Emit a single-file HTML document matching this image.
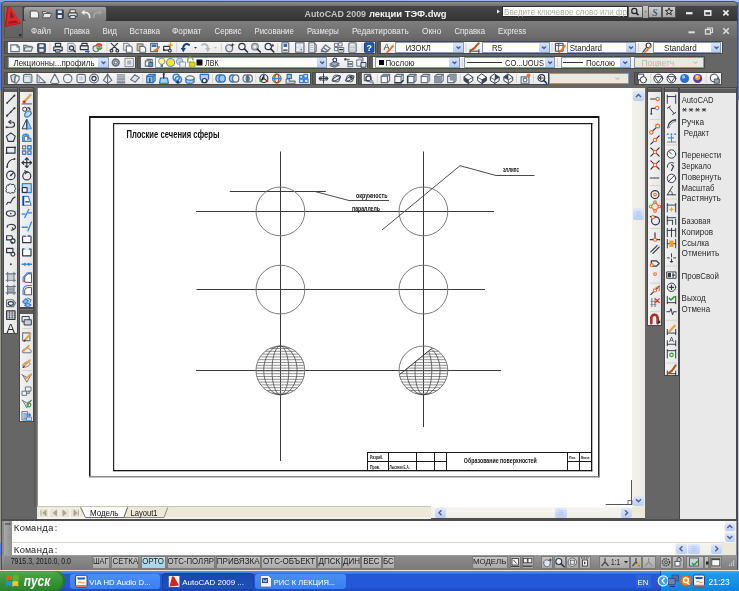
<!DOCTYPE html>
<html><head><meta charset="utf-8"><style>
html,body{margin:0;padding:0;width:739px;height:591px;overflow:hidden;position:relative;background:#5b7fe0}
body>div{position:absolute;box-sizing:border-box}
b{font-weight:700}
svg{position:absolute;left:0;top:0;will-change:transform}
</style></head><body>
<div style="left:0px;top:0px;width:739px;height:591px;background:#5b7fe0"></div>
<div style="left:0px;top:0px;width:739px;height:2px;background:linear-gradient(90deg,#7fa4ee,#a6c4f7)"></div>
<div style="left:0px;top:90px;width:1.6px;height:453px;background:#9d9b8c"></div>
<div style="left:0px;top:556px;width:1.6px;height:14px;background:#8a8a8a"></div>
<div style="left:737.4px;top:100px;width:1.6px;height:470px;background:#b9c3d8"></div>
<div style="left:1px;top:1px;width:737px;height:570px;background:#4e4e4e;border-radius:5px 5px 0 0"></div>
<div style="left:2px;top:2px;width:735px;height:4px;background:linear-gradient(#8e8e8e,#6e6e6e);border-radius:4px 4px 0 0"></div>
<div style="left:2px;top:6px;width:735px;height:15px;background:linear-gradient(#474747,#333)"></div>
<div style="left:2px;top:21px;width:735px;height:17px;background:linear-gradient(#7e7e7e,#6a6a6a)"></div>
<div style="left:2px;top:6px;width:2px;height:564px;background:#666"></div>
<div style="left:3.5px;top:6px;width:19.5px;height:32px;background:linear-gradient(#6e6e6e,#626262);border:1px solid #555;box-sizing:border-box"></div>
<div style="left:23.6px;top:6.8px;width:83.7px;height:14.3px;background:linear-gradient(#a6a6a6,#8a8a8a 50%,#7a7a7a);border-radius:2px;border-right:1px solid #4a4a4a;box-sizing:border-box"></div>
<div style="left:502px;top:6px;width:126px;height:11px;background:#fff;border:1px solid #2a2a2a;box-sizing:border-box"></div>
<div style="left:628px;top:6px;width:15px;height:12px;background:linear-gradient(#d8d8d8,#b0b0b0);border:1px solid #555;box-sizing:border-box"></div>
<div style="left:643px;top:6px;width:5px;height:12px;background:linear-gradient(#c8c8c8,#a0a0a0)"></div>
<div style="left:648px;top:6px;width:14px;height:12px;background:linear-gradient(#d0d0d0,#a8a8a8);border:1px solid #555;box-sizing:border-box"></div>
<div style="left:662px;top:6px;width:14px;height:12px;background:linear-gradient(#d0d0d0,#a8a8a8);border:1px solid #555;box-sizing:border-box"></div>
<div style="left:2px;top:38px;width:735px;height:50px;background:#666"></div>
<div style="left:3.5px;top:41px;width:372.5px;height:13px;background:#5c5c5c;border:1px solid #474747;box-sizing:border-box;border-radius:1px"></div>
<div style="left:8.2px;top:41.8px;width:367px;height:11.4px;background:linear-gradient(#f7f7f7,#e9e9e9)"></div>
<div style="left:376.5px;top:41px;width:346.5px;height:13px;background:#5c5c5c;border:1px solid #474747;box-sizing:border-box;border-radius:1px"></div>
<div style="left:381.2px;top:41.8px;width:341px;height:11.4px;background:linear-gradient(#f7f7f7,#e9e9e9)"></div>
<div style="left:395px;top:42px;width:69px;height:11px;background:#fff;border:1px solid #7f9db9;box-sizing:border-box"></div>
<div style="left:453px;top:43px;width:10px;height:9px;background:linear-gradient(#d6e3fb,#b7cdf6)"></div>
<div style="left:482px;top:42px;width:68px;height:11px;background:#fff;border:1px solid #7f9db9;box-sizing:border-box"></div>
<div style="left:538.5px;top:43px;width:10.5px;height:9px;background:linear-gradient(#d6e3fb,#b7cdf6)"></div>
<div style="left:567px;top:42px;width:69px;height:11px;background:#fff;border:1px solid #7f9db9;box-sizing:border-box"></div>
<div style="left:625.5px;top:43px;width:9.5px;height:9px;background:linear-gradient(#d6e3fb,#b7cdf6)"></div>
<div style="left:653px;top:42px;width:68px;height:11px;background:#fff;border:1px solid #7f9db9;box-sizing:border-box"></div>
<div style="left:711px;top:43px;width:9px;height:9px;background:linear-gradient(#d6e3fb,#b7cdf6)"></div>
<div style="left:3.5px;top:56px;width:132.5px;height:13px;background:#5c5c5c;border:1px solid #474747;box-sizing:border-box;border-radius:1px"></div>
<div style="left:8.2px;top:56.8px;width:127px;height:11.4px;background:linear-gradient(#f7f7f7,#e9e9e9)"></div>
<div style="left:8px;top:57px;width:101px;height:11px;background:#fff;border:1px solid #7f9db9;box-sizing:border-box"></div>
<div style="left:98px;top:58px;width:10px;height:9px;background:linear-gradient(#d6e3fb,#b7cdf6)"></div>
<div style="left:136.5px;top:56px;width:231.5px;height:13px;background:#5c5c5c;border:1px solid #474747;box-sizing:border-box;border-radius:1px"></div>
<div style="left:141.2px;top:56.8px;width:226px;height:11.4px;background:linear-gradient(#f7f7f7,#e9e9e9)"></div>
<div style="left:155px;top:57px;width:172px;height:11px;background:#fff;border:1px solid #7f9db9;box-sizing:border-box"></div>
<div style="left:316.7px;top:58px;width:9.300000000000011px;height:9px;background:linear-gradient(#d6e3fb,#b7cdf6)"></div>
<div style="left:368.5px;top:56px;width:336.5px;height:13px;background:#5c5c5c;border:1px solid #474747;box-sizing:border-box;border-radius:1px"></div>
<div style="left:373.2px;top:56.8px;width:331px;height:11.4px;background:linear-gradient(#f7f7f7,#e9e9e9)"></div>
<div style="left:374.5px;top:57px;width:85.5px;height:11px;background:#fff;border:1px solid #7f9db9;box-sizing:border-box"></div>
<div style="left:449px;top:58px;width:10px;height:9px;background:linear-gradient(#d6e3fb,#b7cdf6)"></div>
<div style="left:378.7px;top:60px;width:5px;height:5px;background:#000"></div>
<div style="left:464.4px;top:57px;width:90.60000000000002px;height:11px;background:#fff;border:1px solid #7f9db9;box-sizing:border-box"></div>
<div style="left:544.6px;top:58px;width:9.399999999999977px;height:9px;background:linear-gradient(#d6e3fb,#b7cdf6)"></div>
<div style="left:467px;top:62px;width:34.6px;height:1px;background:#333"></div>
<div style="left:560.5px;top:57px;width:70.5px;height:11px;background:#fff;border:1px solid #7f9db9;box-sizing:border-box"></div>
<div style="left:619.7px;top:58px;width:10.299999999999955px;height:9px;background:linear-gradient(#d6e3fb,#b7cdf6)"></div>
<div style="left:563px;top:62px;width:20px;height:1px;background:#333"></div>
<div style="left:633.8px;top:57px;width:70.20000000000005px;height:11px;background:#ece9d8;border:1px solid #7f9db9;box-sizing:border-box"></div>
<div style="left:3.5px;top:72px;width:307.5px;height:13px;background:#5c5c5c;border:1px solid #474747;box-sizing:border-box;border-radius:1px"></div>
<div style="left:8.2px;top:72.8px;width:302px;height:11.4px;background:linear-gradient(#f7f7f7,#e9e9e9)"></div>
<div style="left:311.5px;top:72px;width:45.5px;height:13px;background:#5c5c5c;border:1px solid #474747;box-sizing:border-box;border-radius:1px"></div>
<div style="left:316.2px;top:72.8px;width:40px;height:11.4px;background:linear-gradient(#f7f7f7,#e9e9e9)"></div>
<div style="left:357.5px;top:72px;width:191.5px;height:13px;background:#5c5c5c;border:1px solid #474747;box-sizing:border-box;border-radius:1px"></div>
<div style="left:362.2px;top:72.8px;width:186px;height:11.4px;background:linear-gradient(#f7f7f7,#e9e9e9)"></div>
<div style="left:549.4px;top:73px;width:79.60000000000002px;height:11px;background:#ece9d8;border:1px solid #7f9db9;box-sizing:border-box"></div>
<div style="left:634.3px;top:72px;width:87.70000000000005px;height:13px;background:#5c5c5c;border:1px solid #474747;box-sizing:border-box;border-radius:1px"></div>
<div style="left:639.0px;top:72.8px;width:82.20000000000005px;height:11.4px;background:linear-gradient(#f7f7f7,#e9e9e9)"></div>
<div style="left:2px;top:88px;width:35px;height:431px;background:#666"></div>
<div style="left:2.8px;top:86.80000000000001px;width:15.2px;height:247.2px;background:#5a5a5a;border:1px solid #474747;box-sizing:border-box"></div>
<div style="left:3.5999999999999996px;top:87.7px;width:13.6px;height:1px;background:#777"></div>
<div style="left:3.8px;top:92.0px;width:13.2px;height:241.2px;background:linear-gradient(90deg,#f3f3f3,#e6e6e6)"></div>
<div style="left:19px;top:86.80000000000001px;width:15.200000000000003px;height:221.0px;background:#5a5a5a;border:1px solid #474747;box-sizing:border-box"></div>
<div style="left:19.8px;top:87.7px;width:13.600000000000003px;height:1px;background:#777"></div>
<div style="left:20px;top:92.0px;width:13.200000000000003px;height:215.0px;background:linear-gradient(90deg,#f3f3f3,#e6e6e6)"></div>
<div style="left:19px;top:308.4px;width:15.200000000000003px;height:113.6px;background:#5a5a5a;border:1px solid #474747;box-sizing:border-box"></div>
<div style="left:19.8px;top:309.3px;width:13.600000000000003px;height:1px;background:#777"></div>
<div style="left:20px;top:313.6px;width:13.200000000000003px;height:107.6px;background:linear-gradient(90deg,#f3f3f3,#e6e6e6)"></div>
<div style="left:37px;top:88px;width:595px;height:419px;background:#fff"></div>
<div style="left:34px;top:88px;width:4px;height:419px;background:linear-gradient(90deg,#505050,#5c5c5c 30%,#707070 65%,#9c9a8c)"></div>
<div style="left:632px;top:88px;width:13px;height:419px;background:linear-gradient(90deg,#f3f2ec,#ebeae3)"></div>
<div style="left:633px;top:91px;width:11px;height:9.5px;background:linear-gradient(#dfe8fb,#b9cdf5);border-radius:2px"></div>
<div style="left:633px;top:208px;width:11px;height:12px;background:linear-gradient(#dfe8fb,#b9cdf5);border-radius:2px"></div>
<div style="left:633px;top:495.5px;width:11px;height:10px;background:linear-gradient(#dfe8fb,#b9cdf5);border-radius:2px"></div>
<div style="left:37px;top:506px;width:394px;height:13.5px;background:linear-gradient(#c9c6b5 0,#c9c6b5 1px,#ece9d8 1px,#ece9d8 11.5px,#f4f2ea 11.5px)"></div>
<div style="left:431px;top:507px;width:201px;height:11px;background:linear-gradient(#f6f5f0,#eeede6)"></div>
<div style="left:434.6px;top:507.5px;width:11.4px;height:10.5px;background:linear-gradient(#dfe8fb,#b9cdf5);border-radius:2px"></div>
<div style="left:554.7px;top:507.5px;width:12px;height:10.5px;background:linear-gradient(#dfe8fb,#b9cdf5);border-radius:2px"></div>
<div style="left:621px;top:507.5px;width:10.5px;height:10.5px;background:linear-gradient(#dfe8fb,#b9cdf5);border-radius:2px"></div>
<div style="left:632px;top:507px;width:13px;height:11px;background:#ece9d8"></div>
<div style="left:38.5px;top:507.5px;width:10px;height:10px;background:#e6e3d2;border:1px solid #f4f2e8;box-sizing:border-box"></div>
<div style="left:49.0px;top:507.5px;width:10px;height:10px;background:#e6e3d2;border:1px solid #f4f2e8;box-sizing:border-box"></div>
<div style="left:59.5px;top:507.5px;width:10px;height:10px;background:#e6e3d2;border:1px solid #f4f2e8;box-sizing:border-box"></div>
<div style="left:70.0px;top:507.5px;width:10px;height:10px;background:#e6e3d2;border:1px solid #f4f2e8;box-sizing:border-box"></div>
<div style="left:645px;top:88px;width:35px;height:431px;background:#666"></div>
<div style="left:647.1px;top:86.7px;width:15.199999999999932px;height:239.29999999999998px;background:#5a5a5a;border:1px solid #474747;box-sizing:border-box"></div>
<div style="left:647.9px;top:87.6px;width:13.599999999999932px;height:1px;background:#777"></div>
<div style="left:648.1px;top:91.89999999999999px;width:13.199999999999932px;height:233.29999999999998px;background:linear-gradient(90deg,#f3f3f3,#e6e6e6)"></div>
<div style="left:663.8px;top:86.7px;width:15.200000000000045px;height:289.3px;background:#5a5a5a;border:1px solid #474747;box-sizing:border-box"></div>
<div style="left:664.5999999999999px;top:87.6px;width:13.600000000000046px;height:1px;background:#777"></div>
<div style="left:664.8px;top:91.89999999999999px;width:13.200000000000045px;height:283.3px;background:linear-gradient(90deg,#f3f3f3,#e6e6e6)"></div>
<div style="left:679px;top:87.3px;width:58px;height:432px;background:#5a5a5a;border:1px solid #474747;box-sizing:border-box"></div>
<div style="left:680.2px;top:92.6px;width:55.5px;height:426px;background:#e9e9e9"></div>
<div style="left:680px;top:87.6px;width:56px;height:1px;background:#777"></div>
<div style="left:2px;top:519.3px;width:735px;height:1.9px;background:#4e4e4e"></div>
<div style="left:2px;top:521px;width:735px;height:34px;background:#8c8c8c"></div>
<div style="left:4px;top:521px;width:8px;height:34px;background:linear-gradient(90deg,#a8a8a8,#909090)"></div>
<div style="left:5px;top:523px;width:6px;height:2px;background:#6a6a6a"></div>
<div style="left:12px;top:521px;width:724px;height:34px;background:#fff"></div>
<div style="left:12px;top:542px;width:712px;height:1px;background:#d8d5c4"></div>
<div style="left:724px;top:521px;width:12px;height:22px;background:linear-gradient(90deg,#f6f5f0,#efeee8)"></div>
<div style="left:724.8px;top:522.5px;width:10px;height:8.5px;background:linear-gradient(#dfe8fb,#b9cdf5);border-radius:2px"></div>
<div style="left:724.8px;top:533px;width:10px;height:8.5px;background:linear-gradient(#dfe8fb,#b9cdf5);border-radius:2px"></div>
<div style="left:675px;top:543px;width:61px;height:12px;background:linear-gradient(#f6f5f0,#eeede6)"></div>
<div style="left:676px;top:543.5px;width:10.5px;height:10.5px;background:linear-gradient(#dfe8fb,#b9cdf5);border-radius:2px"></div>
<div style="left:688.3px;top:543.5px;width:11.3px;height:10.5px;background:linear-gradient(#dfe8fb,#b9cdf5);border-radius:2px"></div>
<div style="left:711px;top:543.5px;width:11px;height:10.5px;background:linear-gradient(#dfe8fb,#b9cdf5);border-radius:2px"></div>
<div style="left:722px;top:543px;width:14px;height:12px;background:#ece9d8"></div>
<div style="left:2px;top:555px;width:735px;height:15px;background:linear-gradient(#9a9a9a,#7c7c7c)"></div>
<div style="left:4px;top:556px;width:88px;height:13px;background:linear-gradient(#8d8d8d,#7a7a7a)"></div>
<div style="left:92.2px;top:556px;width:17.799999999999997px;height:12.5px;background:linear-gradient(#c6c6c6,#aaaaaa);border:1px solid #7a7a7a;box-sizing:border-box"></div>
<div style="left:110.9px;top:556px;width:28.599999999999994px;height:12.5px;background:linear-gradient(#c6c6c6,#aaaaaa);border:1px solid #7a7a7a;box-sizing:border-box"></div>
<div style="left:140.9px;top:556px;width:25.099999999999994px;height:12.5px;background:linear-gradient(#bfe3ee,#a3d3e6);border:1px solid #7a7a7a;box-sizing:border-box"></div>
<div style="left:166.6px;top:556px;width:48.900000000000006px;height:12.5px;background:linear-gradient(#c6c6c6,#aaaaaa);border:1px solid #7a7a7a;box-sizing:border-box"></div>
<div style="left:215.5px;top:556px;width:45.5px;height:12.5px;background:linear-gradient(#c6c6c6,#aaaaaa);border:1px solid #7a7a7a;box-sizing:border-box"></div>
<div style="left:261px;top:556px;width:56.10000000000002px;height:12.5px;background:linear-gradient(#c6c6c6,#aaaaaa);border:1px solid #7a7a7a;box-sizing:border-box"></div>
<div style="left:317.1px;top:556px;width:24.5px;height:12.5px;background:linear-gradient(#c6c6c6,#aaaaaa);border:1px solid #7a7a7a;box-sizing:border-box"></div>
<div style="left:341.6px;top:556px;width:19.69999999999999px;height:12.5px;background:linear-gradient(#c6c6c6,#aaaaaa);border:1px solid #7a7a7a;box-sizing:border-box"></div>
<div style="left:361.3px;top:556px;width:20.30000000000001px;height:12.5px;background:linear-gradient(#c6c6c6,#aaaaaa);border:1px solid #7a7a7a;box-sizing:border-box"></div>
<div style="left:381.6px;top:556px;width:13.5px;height:12.5px;background:linear-gradient(#c6c6c6,#aaaaaa);border:1px solid #7a7a7a;box-sizing:border-box"></div>
<div style="left:395.1px;top:556px;width:77px;height:12.5px;background:linear-gradient(#8c8c8c,#7a7a7a)"></div>
<div style="left:472.3px;top:556px;width:36.0px;height:12.5px;background:linear-gradient(#c4c4c4,#a8a8a8);border:1px solid #7a7a7a;box-sizing:border-box"></div>
<div style="left:509.6px;top:556px;width:11.399999999999977px;height:12.5px;background:linear-gradient(#c4c4c4,#a8a8a8);border:1px solid #7a7a7a;box-sizing:border-box"></div>
<div style="left:521.6px;top:556px;width:12.399999999999977px;height:12.5px;background:linear-gradient(#c4c4c4,#a8a8a8);border:1px solid #7a7a7a;box-sizing:border-box"></div>
<div style="left:541.2px;top:556px;width:12.099999999999909px;height:12.5px;background:linear-gradient(#c4c4c4,#a8a8a8);border:1px solid #7a7a7a;box-sizing:border-box"></div>
<div style="left:553.5px;top:556px;width:12.5px;height:12.5px;background:linear-gradient(#c4c4c4,#a8a8a8);border:1px solid #7a7a7a;box-sizing:border-box"></div>
<div style="left:566px;top:556px;width:12.5px;height:12.5px;background:linear-gradient(#c4c4c4,#a8a8a8);border:1px solid #7a7a7a;box-sizing:border-box"></div>
<div style="left:579px;top:556px;width:12px;height:12.5px;background:linear-gradient(#c4c4c4,#a8a8a8);border:1px solid #7a7a7a;box-sizing:border-box"></div>
<div style="left:598.5px;top:556px;width:31.0px;height:12.5px;background:linear-gradient(#c4c4c4,#a8a8a8);border:1px solid #7a7a7a;box-sizing:border-box"></div>
<div style="left:630.4px;top:556px;width:11.600000000000023px;height:12.5px;background:linear-gradient(#c4c4c4,#a8a8a8);border:1px solid #7a7a7a;box-sizing:border-box"></div>
<div style="left:642px;top:556px;width:13.5px;height:12.5px;background:linear-gradient(#c4c4c4,#a8a8a8);border:1px solid #7a7a7a;box-sizing:border-box"></div>
<div style="left:660px;top:556px;width:12px;height:12.5px;background:linear-gradient(#c4c4c4,#a8a8a8);border:1px solid #7a7a7a;box-sizing:border-box"></div>
<div style="left:672px;top:556px;width:11.5px;height:12.5px;background:linear-gradient(#c4c4c4,#a8a8a8);border:1px solid #7a7a7a;box-sizing:border-box"></div>
<div style="left:686px;top:556px;width:18px;height:12.5px;background:linear-gradient(#c4c4c4,#a8a8a8);border:1px solid #7a7a7a;box-sizing:border-box"></div>
<div style="left:704px;top:556px;width:5px;height:12.5px;background:linear-gradient(#c4c4c4,#a8a8a8);border:1px solid #7a7a7a;box-sizing:border-box"></div>
<div style="left:710px;top:556px;width:11.5px;height:12.5px;background:linear-gradient(#c4c4c4,#a8a8a8);border:1px solid #7a7a7a;box-sizing:border-box"></div>
<div style="left:0px;top:570px;width:739px;height:21px;background:linear-gradient(#ece4d4 0,#ece4d4 0.8px,#4a92f5 1.2px,#3a84ee 3px,#2458d6 4.5px,#2357d8 17px,#1b47bc 21px)"></div>
<div style="left:0px;top:570.5px;width:64.5px;height:20.5px;background:linear-gradient(#5cb85c 0,#44a344 3px,#379637 50%,#2c852c);border-radius:0 9px 9px 0;box-shadow:inset -2px 0 2px #2a6a2a"></div>
<div style="left:70.3px;top:573.5px;width:89.7px;height:15.5px;background:linear-gradient(#4a8ef8,#3a7ff2);border-radius:3px"></div>
<div style="left:161.8px;top:573.3px;width:92.4px;height:16.5px;background:linear-gradient(#1a47b0,#1f50bc);border-radius:3px;border:1px solid #1a3f98"></div>
<div style="left:254.9px;top:573.5px;width:91.1px;height:15.5px;background:linear-gradient(#4a8ef8,#3a7ff2);border-radius:3px"></div>
<div style="left:660px;top:570.8px;width:79px;height:20.2px;background:linear-gradient(#3ab0f8 0,#1e98ee 3px,#1390e8 60%,#0f84dc);border-left:1px solid #1a4fb0;box-sizing:border-box"></div>
<div style="left:635.5px;top:575px;width:15px;height:12.5px;background:#2f62d4"></div>
<svg width="739" height="591" viewBox="0 0 739 591"><g transform="translate(9.75,42.25) scale(1.05)" stroke-width="1.1" stroke-linecap="round" stroke-linejoin="round"><path d="M1 2.5h6l2 2v4.5h-8z" fill="#f3f5f8" stroke="#66707c"/><path d="M7 2.5v2h2" fill="none" stroke="#66707c"/></g>
<g transform="translate(22.75,42.25) scale(1.05)" stroke-width="1.1" stroke-linecap="round" stroke-linejoin="round"><path d="M1 3h3l1 1h3v1" fill="none" stroke="#66707c"/><path d="M1 3v5.5h7l1.5-4h-7l-1.5 4" fill="#dfe5ec" stroke="#66707c"/></g>
<g transform="translate(36.25,42.25) scale(1.05)" stroke-width="1.1" stroke-linecap="round" stroke-linejoin="round"><rect x="1.5" y="1.5" width="7" height="8" rx="0.5" fill="#5a6b86" stroke="#2f3642"/><rect x="3" y="2" width="4" height="2.5" fill="#e8ecf2"/><rect x="3" y="6.5" width="4" height="2.5" fill="#e8ecf2"/></g>
<g transform="translate(52.75,42.25) scale(1.05)" stroke-width="1.1" stroke-linecap="round" stroke-linejoin="round"><rect x="2.5" y="1" width="5" height="3" fill="#f3f5f8" stroke="#2f3642"/><path d="M1 4.5h8v3.5h-8z" fill="#e6e9ee" stroke="#2f3642"/><rect x="3" y="7" width="4" height="2.5" fill="#9cb6d4" stroke="#2f3642" stroke-width="0.8"/></g>
<g transform="translate(66.25,42.25) scale(1.05)" stroke-width="1.1" stroke-linecap="round" stroke-linejoin="round"><path d="M1.5 1h5l2 2v6h-7z" fill="#eef0f3" stroke="#9aa2ad"/><circle cx="5" cy="5.5" r="2" fill="#dbe9f5" stroke="#2f3642"/><path d="M6.5 7l2 2" stroke="#2f3642" stroke-width="1.3"/></g>
<g transform="translate(79.25,42.25) scale(1.05)" stroke-width="1.1" stroke-linecap="round" stroke-linejoin="round"><rect x="2.5" y="1" width="5" height="2.5" fill="#f3f5f8" stroke="#2f3642"/><path d="M1 3.5h7.5v3.5h-7.5z" fill="#e6e9ee" stroke="#2f3642"/><path d="M5.5 8.2h2.5v-1.3l2 2l-2 2v-1.3h-2.5z" fill="#1f63c9"/></g>
<g transform="translate(92.15,42.25) scale(1.05)" stroke-width="1.1" stroke-linecap="round" stroke-linejoin="round"><path d="M0.8 6c0-2 2-3 4-3s3 3 1 5s-5 1-5-2z" fill="#e3e6ea" stroke="#66707c"/><circle cx="6.5" cy="3.8" r="3" fill="#f0a030"/><path d="M4 3a3 3 0 0 1 5 0" stroke="#d33" stroke-width="1.4" fill="none"/><path d="M5 6a3 3 0 0 0 4-0.5" stroke="#3a9a3a" stroke-width="1.4" fill="none"/><circle cx="6.5" cy="3.8" r="1.2" fill="#4a90d8"/></g>
<g transform="translate(109.15,42.25) scale(1.05)" stroke-width="1.1" stroke-linecap="round" stroke-linejoin="round"><path d="M2 1l6 6M8 1l-6 6" stroke="#2f3642" stroke-width="1.1"/><circle cx="2.2" cy="8" r="1.3" fill="none" stroke="#2f3642"/><circle cx="7.8" cy="8" r="1.3" fill="none" stroke="#2f3642"/></g>
<g transform="translate(122.65,42.25) scale(1.05)" stroke-width="1.1" stroke-linecap="round" stroke-linejoin="round"><path d="M1 1h4l1.5 1.5v5h-5.5z" fill="#f0f2f5" stroke="#8b939e"/><path d="M3.5 3.5h4l1.5 1.5v4.5h-5.5z" fill="#fff" stroke="#66707c"/></g>
<g transform="translate(136.15,42.25) scale(1.05)" stroke-width="1.1" stroke-linecap="round" stroke-linejoin="round"><path d="M1 1.5h5.5v6.5h-5.5z" fill="#c9bda6" stroke="#8b8070"/><path d="M3.5 4h4l1.5 1.5v4h-5.5z" fill="#fff" stroke="#66707c"/></g>
<g transform="translate(149.05,42.25) scale(1.05)" stroke-width="1.1" stroke-linecap="round" stroke-linejoin="round"><rect x="1.5" y="1" width="6.5" height="8" fill="#f3f5f8" stroke="#66707c"/><rect x="2.5" y="2" width="4.5" height="2.5" fill="#2e6cc4"/><path d="M5 8l3-1.5l1.5-2" stroke="#e8782a" stroke-width="2"/></g>
<g transform="translate(162.55,42.25) scale(1.05)" stroke-width="1.1" stroke-linecap="round" stroke-linejoin="round"><path d="M1 4h6v3.5h-6z" fill="none" stroke="#2f3642"/><circle cx="1.5" cy="7.5" r="1" fill="#2f3642"/><circle cx="7" cy="8" r="1.3" fill="#fff" stroke="#2f3642"/><path d="M7.5 0.5l0.6 1.6l1.6 0.6l-1.6 0.6l-0.6 1.6l-0.6-1.6l-1.6-0.6l1.6-0.6z" fill="#f0a020" stroke="#e09010" stroke-width="0.5"/></g>
<g transform="translate(180.15,42.25) scale(1.05)" stroke-width="1.1" stroke-linecap="round" stroke-linejoin="round"><path d="M8.5 2.5c-3-2-6 0-5.5 4" fill="none" stroke="#1e3f86" stroke-width="1.8"/><path d="M0.5 5.5l2.5 4l2.5-4z" fill="#1e3f86"/></g>
<g transform="translate(190.25,42.25) scale(1.05)" stroke-width="1.1" stroke-linecap="round" stroke-linejoin="round"><path d="M3.5 4.5h3l-1.5 1.8z" fill="#1e3f86"/></g>
<g transform="translate(200.45,42.25) scale(1.05)" stroke-width="1.1" stroke-linecap="round" stroke-linejoin="round"><path d="M1.5 2.5c3-2 6 0 5.5 4" fill="none" stroke="#b4bac2" stroke-width="1.8"/><path d="M9.5 5.5l-2.5 4l-2.5-4z" fill="#b4bac2"/></g>
<g transform="translate(210.25,42.25) scale(1.05)" stroke-width="1.1" stroke-linecap="round" stroke-linejoin="round"><path d="M3.5 4.5h3l-1.5 1.8z" fill="#b8bcc4"/></g>
<g transform="translate(224.15,42.25) scale(1.05)" stroke-width="1.1" stroke-linecap="round" stroke-linejoin="round"><path d="M1.5 5c0-2 2-3 4-2.5s3 2 2.5 4s-2 3-4 2.5s-2.5-2-2.5-4z" fill="#e3e7ec" stroke="#66707c"/><path d="M8 0.5l0.5 1.5l1.5 0.5l-1.5 0.5l-0.5 1.5l-0.5-1.5l-1.5-0.5l1.5-0.5z" fill="#2f3642"/></g>
<g transform="translate(237.75,42.25) scale(1.05)" stroke-width="1.1" stroke-linecap="round" stroke-linejoin="round"><circle cx="4" cy="4" r="3" fill="#e8f1f6" stroke="#2f3642" stroke-width="1.1"/><path d="M6.3 6.3l3 3" stroke="#2f3642" stroke-width="1.6"/></g>
<g transform="translate(250.55,42.25) scale(1.05)" stroke-width="1.1" stroke-linecap="round" stroke-linejoin="round"><circle cx="4.2" cy="4.2" r="3.2" fill="#b9c4cc" stroke="#7d8890" stroke-width="1.1"/><circle cx="4.2" cy="4.2" r="1.2" fill="#f4f6f8"/><path d="M6.5 6.5l2.8 2.8" stroke="#2f3642" stroke-width="1.6"/></g>
<g transform="translate(264.05,42.25) scale(1.05)" stroke-width="1.1" stroke-linecap="round" stroke-linejoin="round"><circle cx="4" cy="4" r="3" fill="#e8f1f6" stroke="#2f3642" stroke-width="1.1"/><path d="M6.3 6.3l3 3" stroke="#2f3642" stroke-width="1.6"/><path d="M5 2.5h3v-1.5l1.5 2l-1.5 2v-1.5" fill="#2f3642" stroke="none"/></g>
<g transform="translate(280.35,42.25) scale(1.05)" stroke-width="1.1" stroke-linecap="round" stroke-linejoin="round"><rect x="1.5" y="0.5" width="6.5" height="9" fill="#f5f7fa" stroke="#66707c"/><rect x="3" y="1.5" width="3.5" height="3" fill="#2e6cc4"/><path d="M3 7.5h3.5" stroke="#2f3642" stroke-width="1"/></g>
<g transform="translate(294.55,42.25) scale(1.05)" stroke-width="1.1" stroke-linecap="round" stroke-linejoin="round"><rect x="1" y="0.5" width="8" height="9" fill="#d7dde4" stroke="#66707c"/><path d="M2 2h2v2h-2zM6 2h2v2h-2zM2 6h2v2h-2zM6 6h2v2h-2z" fill="#f6f7f9"/><circle cx="6.5" cy="7" r="0.9" fill="#3c82d6"/></g>
<g transform="translate(306.75,42.25) scale(1.05)" stroke-width="1.1" stroke-linecap="round" stroke-linejoin="round"><path d="M2 0.5h5.5v9h-5.5z" fill="#eef0f3" stroke="#66707c"/><path d="M7.5 1l1.5 1.5v6l-1.5 1" fill="#c9ced6" stroke="#66707c"/><path d="M3 3h3M3 5h3M3 7h3" stroke="#aab2bc" stroke-width="0.8"/></g>
<g transform="translate(320.25,42.25) scale(1.05)" stroke-width="1.1" stroke-linecap="round" stroke-linejoin="round"><path d="M1 7.5l4-5l4.5 3.5l-4 3.5z" fill="#e6e9ec" stroke="#66707c"/><path d="M3.5 5.5l4 3" stroke="#66707c"/><path d="M1 9h4" stroke="#66707c"/></g>
<g transform="translate(333.75,42.25) scale(1.05)" stroke-width="1.1" stroke-linecap="round" stroke-linejoin="round"><path d="M1 1h3v3h-3zM5 0.5h3v3h-3zM1 5h3v3h-3z" fill="#f4f6f8" stroke="#66707c" stroke-width="0.9"/><rect x="4.5" y="5" width="5" height="4.5" fill="#dfe4ea" stroke="#66707c" stroke-width="0.9"/><path d="M5.5 7h3" stroke="#2f3642"/></g>
<g transform="translate(347.25,42.25) scale(1.05)" stroke-width="1.1" stroke-linecap="round" stroke-linejoin="round"><rect x="1.5" y="0.5" width="7" height="9" rx="1" fill="#eef0f3" stroke="#66707c"/><rect x="2.5" y="1.5" width="5" height="2" fill="#fff" stroke="#9aa2ad" stroke-width="0.6"/><path d="M2.7 5h4.6M2.7 6.5h4.6M2.7 8h4.6" stroke="#aab2bc" stroke-width="0.7"/></g>
<g transform="translate(363.95,42.25) scale(1.05)" stroke-width="1.1" stroke-linecap="round" stroke-linejoin="round"><rect x="0.5" y="0.5" width="9" height="9" rx="1.2" fill="#1c5aa8" stroke="#16478a"/><text x="5" y="8.3" font-family="Liberation Sans" font-weight="700" font-size="8.5" text-anchor="middle" fill="#fff" stroke="none">?</text></g>
<g transform="translate(382.95,42.25) scale(1.05)" stroke-width="1.1" stroke-linecap="round" stroke-linejoin="round"><text x="3.5" y="7.8" font-family="Liberation Sans" font-size="9" text-anchor="middle" fill="#2f3642" stroke="none">A</text><path d="M4 9.5c1-1 2-1.5 3-3l2.5-3" stroke="#e8782a" stroke-width="1.8" fill="none"/></g>
<g transform="translate(469.25,42.25) scale(1.05)" stroke-width="1.1" stroke-linecap="round" stroke-linejoin="round"><path d="M0.8 7v3M9.2 7v3M0.8 8.5h8.4" stroke="#2f3642" stroke-width="0.9"/><path d="M2 7.5c2-1 4-2.5 5-4.5l2-2" stroke="#b05a20" stroke-width="2" fill="none"/></g>
<g transform="translate(554.95,42.25) scale(1.05)" stroke-width="1.1" stroke-linecap="round" stroke-linejoin="round"><rect x="0.8" y="1" width="7" height="7.5" fill="#f6f7f9" stroke="#2f3642" stroke-width="0.9"/><path d="M0.8 3h7M3.5 1v7.5" stroke="#2f3642" stroke-width="0.7"/><path d="M4 9.5c1-1 2-1.5 3-3l2.5-3" stroke="#e8782a" stroke-width="1.8" fill="none"/></g>
<g transform="translate(641.75,42.25) scale(1.05)" stroke-width="1.1" stroke-linecap="round" stroke-linejoin="round"><path d="M1 9.5l3-4" stroke="#2f3642"/><circle cx="6.5" cy="3" r="2.3" fill="#fff" stroke="#2f3642"/><path d="M3 9.5c1-1 2-1.5 3-3l2.5-3" stroke="#e8782a" stroke-width="1.6" fill="none"/></g>
<line x1="50" y1="43" x2="50" y2="52" stroke="#d6d3c4" stroke-width="1"/>
<line x1="107" y1="43" x2="107" y2="52" stroke="#d6d3c4" stroke-width="1"/>
<line x1="176.6" y1="43" x2="176.6" y2="52" stroke="#d6d3c4" stroke-width="1"/>
<line x1="221.3" y1="43" x2="221.3" y2="52" stroke="#d6d3c4" stroke-width="1"/>
<line x1="277.4" y1="43" x2="277.4" y2="52" stroke="#d6d3c4" stroke-width="1"/>
<line x1="362" y1="43" x2="362" y2="52" stroke="#d6d3c4" stroke-width="1"/>
<line x1="466.0" y1="43" x2="466.0" y2="52" stroke="#d6d3c4" stroke-width="1"/>
<line x1="552.0" y1="43" x2="552.0" y2="52" stroke="#d6d3c4" stroke-width="1"/>
<line x1="638.5" y1="43" x2="638.5" y2="52" stroke="#d6d3c4" stroke-width="1"/>
<g transform="translate(110.45,57.25) scale(1.05)" stroke-width="1.1" stroke-linecap="round" stroke-linejoin="round"><circle cx="5" cy="5" r="3.2" fill="none" stroke="#66707c" stroke-width="1.6" stroke-dasharray="1.5 1"/><circle cx="5" cy="5" r="1.6" fill="none" stroke="#66707c"/></g>
<g transform="translate(123.95,57.25) scale(1.05)" stroke-width="1.1" stroke-linecap="round" stroke-linejoin="round"><rect x="1" y="1" width="8" height="8" fill="none" stroke="#8a929c" stroke-dasharray="1 1"/><rect x="3" y="3" width="4" height="4" fill="#aab2bc"/></g>
<g transform="translate(143.75,57.25) scale(1.05)" stroke-width="1.1" stroke-linecap="round" stroke-linejoin="round"><path d="M1.5 3.5h5v5h-5z" fill="#eef0f3" stroke="#66707c"/><path d="M3 2h5v5" fill="none" stroke="#66707c"/><rect x="5" y="5" width="3.5" height="4" fill="#5a8fd0" stroke="#2f3642" stroke-width="0.6"/></g>
<g transform="translate(156.55,57.25) scale(1.05)" stroke-width="1.1" stroke-linecap="round" stroke-linejoin="round"><circle cx="5" cy="3.8" r="3" fill="#fff8a0" stroke="#8a8a50" stroke-width="0.8"/><rect x="3.8" y="6.8" width="2.4" height="2.5" fill="#6070a0"/></g>
<g transform="translate(165.35,57.25) scale(1.05)" stroke-width="1.1" stroke-linecap="round" stroke-linejoin="round"><circle cx="5" cy="5" r="3.8" fill="#f5e23a" stroke="#5b8fc8" stroke-width="1"/></g>
<g transform="translate(175.45,57.25) scale(1.05)" stroke-width="1.1" stroke-linecap="round" stroke-linejoin="round"><circle cx="4" cy="4" r="3.2" fill="#b8d4e6" stroke="#8aa0b4" stroke-width="0.9"/><rect x="4.5" y="4.5" width="5" height="5" fill="#eef0f3" stroke="#8a929c" stroke-width="0.8"/></g>
<g transform="translate(185.65,57.25) scale(1.05)" stroke-width="1.1" stroke-linecap="round" stroke-linejoin="round"><path d="M2 5v-2.5a2.5 2.5 0 0 1 5 0" fill="none" stroke="#8aa040" stroke-width="1.3"/><rect x="3.5" y="4.5" width="5.5" height="5" rx="0.8" fill="#d8d820" stroke="#8a9a20" stroke-width="0.8"/></g>
<g transform="translate(329.05,57.25) scale(1.05)" stroke-width="1.1" stroke-linecap="round" stroke-linejoin="round"><path d="M1 6.5l4-2.5l4.5 2l-4 2.5z" fill="#8ab4e0" stroke="#66707c"/><path d="M1 8l4 1.5l4.5-2" fill="none" stroke="#66707c"/><circle cx="5.5" cy="2.5" r="1.8" fill="#fff" stroke="#2f3642"/></g>
<g transform="translate(343.25,57.25) scale(1.05)" stroke-width="1.1" stroke-linecap="round" stroke-linejoin="round"><path d="M1 1h2v2h-2z" fill="#2f3642"/><path d="M3 2h3M4.5 2v7M4.5 4h4.5v2h-4.5M4.5 7h4.5v2h-4.5" stroke="#66707c" fill="none" stroke-width="0.9"/></g>
<g transform="translate(356.05,57.25) scale(1.05)" stroke-width="1.1" stroke-linecap="round" stroke-linejoin="round"><path d="M1 2.5h4.5v6h-4.5z" fill="#eef0f3" stroke="#66707c" stroke-width="0.9"/><path d="M2.5 0.5h4v3" fill="none" stroke="#66707c"/><rect x="5" y="5" width="4.5" height="4.5" fill="#dde3ea" stroke="#2f3642" stroke-width="0.9"/></g>
<rect x="196.5" y="59.5" width="6" height="6" fill="#111"/>
<line x1="462.3" y1="58" x2="462.3" y2="67" stroke="#d6d3c4" stroke-width="1"/>
<line x1="557.5" y1="58" x2="557.5" y2="67" stroke="#d6d3c4" stroke-width="1"/>
<g transform="translate(9.65,73.25) scale(1.05)" stroke-width="1.1" stroke-linecap="round" stroke-linejoin="round"><path d="M1 2.5l3.5-1.5l1.5 1l-1 2v5l-3-1.5z" fill="#d5dce4" stroke="#66707c"/><path d="M6 2l3 1v3l-2.5 3.5l-1.5-0.5v-4z" fill="#eef1f4" stroke="#66707c"/></g>
<g transform="translate(22.45,73.25) scale(1.05)" stroke-width="1.1" stroke-linecap="round" stroke-linejoin="round"><rect x="1" y="1" width="8" height="8" rx="1.5" fill="#e3e8ee" stroke="#66707c"/><path d="M1.5 3h6v6" fill="none" stroke="#9aa4b0" stroke-width="0.7"/></g>
<g transform="translate(36.05,73.25) scale(1.05)" stroke-width="1.1" stroke-linecap="round" stroke-linejoin="round"><path d="M1 1v8h8z" fill="#eef1f4" stroke="#66707c"/><path d="M1 1l2 2v6" fill="none" stroke="#9aa2ad"/></g>
<g transform="translate(49.55,73.25) scale(1.05)" stroke-width="1.1" stroke-linecap="round" stroke-linejoin="round"><path d="M5 0.8l-4 7.5a4 1.5 0 0 0 8 0z" fill="#eef1f4" stroke="#66707c"/></g>
<g transform="translate(62.45,73.25) scale(1.05)" stroke-width="1.1" stroke-linecap="round" stroke-linejoin="round"><circle cx="5" cy="5" r="4" fill="#eef1f4" stroke="#66707c"/><ellipse cx="4" cy="3.8" rx="2" ry="1.5" fill="#fff"/></g>
<g transform="translate(75.95,73.25) scale(1.05)" stroke-width="1.1" stroke-linecap="round" stroke-linejoin="round"><rect x="1" y="1" width="8" height="8" rx="1.8" fill="#eef1f4" stroke="#66707c"/><rect x="3" y="3" width="4" height="4" fill="#c9d2dc"/></g>
<g transform="translate(88.75,73.25) scale(1.05)" stroke-width="1.1" stroke-linecap="round" stroke-linejoin="round"><circle cx="5" cy="5" r="4.2" fill="#eef1f4" stroke="#66707c"/><circle cx="5" cy="5" r="2" fill="none" stroke="#2f3642" stroke-width="1.1"/></g>
<g transform="translate(102.35,73.25) scale(1.05)" stroke-width="1.1" stroke-linecap="round" stroke-linejoin="round"><path d="M5 0.8l-4 6l4 2.7l4-2.7z" fill="#eef1f4" stroke="#66707c"/><path d="M5 0.8v8.7" stroke="#66707c"/></g>
<g transform="translate(115.75,73.25) scale(1.05)" stroke-width="1.1" stroke-linecap="round" stroke-linejoin="round"><path d="M1.5 1.5h7M1.5 3.5h7M1.5 5.5h7M1.5 7.5h7M1.5 9h7" stroke="#7b8590" stroke-width="1.3"/></g>
<g transform="translate(129.45,73.25) scale(1.05)" stroke-width="1.1" stroke-linecap="round" stroke-linejoin="round"><path d="M1 6l4-4.5l4.5 2.5l-4 4.5z" fill="#dfe4ea" stroke="#66707c"/></g>
<g transform="translate(145.65,73.25) scale(1.05)" stroke-width="1.1" stroke-linecap="round" stroke-linejoin="round"><path d="M1 3l2-2h6v6l-2 2h-6z" fill="#8ec3ec" stroke="#2d6db0"/><path d="M1 3h6v6M7 3l2-2" fill="none" stroke="#2d6db0"/><path d="M4 8v-3" stroke="#2f3642" stroke-width="1.2"/></g>
<g transform="translate(158.45,73.25) scale(1.05)" stroke-width="1.1" stroke-linecap="round" stroke-linejoin="round"><path d="M1 9.5l1-5h6.5l1 5z" fill="#a8d0f0" stroke="#2d6db0"/><path d="M5 0.5v4" stroke="#2f3642" stroke-width="1.4"/><circle cx="5" cy="1" r="1" fill="#2f3642"/></g>
<g transform="translate(172.05,73.25) scale(1.05)" stroke-width="1.1" stroke-linecap="round" stroke-linejoin="round"><circle cx="4" cy="4" r="3" fill="none" stroke="#3c82d6" stroke-width="1.4"/><circle cx="6" cy="6" r="3" fill="none" stroke="#3c82d6" stroke-width="1.4"/><circle cx="5.5" cy="8.5" r="1.3" fill="#2f3642"/></g>
<g transform="translate(184.75,73.25) scale(1.05)" stroke-width="1.1" stroke-linecap="round" stroke-linejoin="round"><path d="M1 4.5a4 2 0 0 1 8 0" fill="none" stroke="#2f3642" stroke-width="0.8"/><path d="M1 4.5v3a4 2 0 0 0 8 0v-3a4 2 0 0 1-8 0" fill="#a8d0f0" stroke="#2d6db0"/><circle cx="8.5" cy="7.5" r="1.3" fill="#8a929c"/></g>
<g transform="translate(199.15,73.25) scale(1.05)" stroke-width="1.1" stroke-linecap="round" stroke-linejoin="round"><path d="M1 1h8v4l-2 4h-4l-2-4z" fill="#a8d0f0" stroke="#2d6db0"/><circle cx="5" cy="7" r="2" fill="#fff" stroke="#2f3642"/></g>
<g transform="translate(215.35,73.25) scale(1.05)" stroke-width="1.1" stroke-linecap="round" stroke-linejoin="round"><ellipse cx="3.5" cy="5" rx="3" ry="3.5" fill="#9cc8ee" stroke="#2d6db0" stroke-width="1.2"/><ellipse cx="6.5" cy="5" rx="3" ry="3.5" fill="#9cc8ee" stroke="#2d6db0" stroke-width="1.2"/></g>
<g transform="translate(228.85,73.25) scale(1.05)" stroke-width="1.1" stroke-linecap="round" stroke-linejoin="round"><ellipse cx="3.5" cy="5" rx="3" ry="3.5" fill="#9cc8ee" stroke="#2d6db0" stroke-width="1.2"/><ellipse cx="6.5" cy="5" rx="3" ry="3.5" fill="#eef1f4" stroke="#66707c" stroke-width="1.2"/></g>
<g transform="translate(242.45,73.25) scale(1.05)" stroke-width="1.1" stroke-linecap="round" stroke-linejoin="round"><ellipse cx="3.5" cy="5" rx="3" ry="3.5" fill="#eef1f4" stroke="#66707c" stroke-width="1.2"/><ellipse cx="6.5" cy="5" rx="3" ry="3.5" fill="none" stroke="#66707c" stroke-width="1.2"/><path d="M5 2.2a3 3.5 0 0 1 0 5.6a3 3.5 0 0 1 0-5.6" fill="#2d6db0"/></g>
<g transform="translate(258.65,73.25) scale(1.05)" stroke-width="1.1" stroke-linecap="round" stroke-linejoin="round"><circle cx="5" cy="5" r="3.8" fill="none" stroke="#2f3642"/><path d="M5 1v4l-3.3 2.5M5 5l3.3 2.5" stroke="#2f3642"/><circle cx="5" cy="1.2" r="1" fill="#3c82d6"/><circle cx="1.7" cy="7.5" r="1" fill="#3a9a3a"/><circle cx="8.3" cy="7.5" r="1" fill="#d0392b"/></g>
<g transform="translate(271.55,73.25) scale(1.05)" stroke-width="1.1" stroke-linecap="round" stroke-linejoin="round"><ellipse cx="5" cy="5" rx="4" ry="4.2" fill="none" stroke="#3a9a3a" stroke-width="1.2"/><ellipse cx="5" cy="5" rx="2" ry="4.2" fill="none" stroke="#d0392b" stroke-width="1.2"/><path d="M1 5h8" stroke="#3c82d6" stroke-width="1.2"/></g>
<g transform="translate(285.05,73.25) scale(1.05)" stroke-width="1.1" stroke-linecap="round" stroke-linejoin="round"><path d="M1 9.5v-4h3v2h5.5v2z" fill="#e3e8ee" stroke="#66707c"/><rect x="2" y="1" width="4" height="4" fill="#8ec3ec" stroke="#2d6db0"/></g>
<g transform="translate(298.55,73.25) scale(1.05)" stroke-width="1.1" stroke-linecap="round" stroke-linejoin="round"><path d="M1 2h3v3h-3zM5 1h3.5v3.5h-3.5zM1 5.5h3.5v3.5h-3.5zM5.5 5.5h3.5v3.5h-3.5z" fill="#cfe4f7" stroke="#3c82d6" stroke-width="1.2"/></g>
<g transform="translate(318.25,73.25) scale(1.05)" stroke-width="1.1" stroke-linecap="round" stroke-linejoin="round"><path d="M5 0.5v9M1 5h8" stroke="#2f3642" stroke-width="0.9"/><path d="M2 3.5l-1.2 1.5l1.2 1.5M8 3.5l1.2 1.5l-1.2 1.5" fill="none" stroke="#2f3642"/><ellipse cx="5" cy="5" rx="3" ry="1.8" fill="none" stroke="#2f3642" stroke-width="0.8"/></g>
<g transform="translate(331.05,73.25) scale(1.05)" stroke-width="1.1" stroke-linecap="round" stroke-linejoin="round"><circle cx="5" cy="5" r="3.2" fill="#eef1f4" stroke="#66707c"/><ellipse cx="5" cy="5" rx="4.5" ry="1.6" transform="rotate(-30 5 5)" fill="none" stroke="#2f3642" stroke-width="0.9"/></g>
<g transform="translate(344.55,73.25) scale(1.05)" stroke-width="1.1" stroke-linecap="round" stroke-linejoin="round"><circle cx="5" cy="5" r="3.2" fill="#eef1f4" stroke="#66707c"/><ellipse cx="5" cy="5" rx="4.5" ry="1.6" transform="rotate(-30 5 5)" fill="none" stroke="#2f3642" stroke-width="0.9"/><circle cx="6" cy="4" r="1.2" fill="#2f3642"/></g>
<g transform="translate(363.25,73.25) scale(1.05)" stroke-width="1.1" stroke-linecap="round" stroke-linejoin="round"><rect x="1" y="1" width="6" height="6" fill="#eef1f4" stroke="#66707c"/><circle cx="5" cy="5" r="2.5" fill="none" stroke="#2f3642"/><path d="M6.8 6.8l2.5 2.5" stroke="#2f3642" stroke-width="1.4"/><rect x="6" y="6.5" width="3.5" height="3" fill="#9aa2ad"/></g>
<g transform="translate(380.15,73.25) scale(1.05)" stroke-width="1.1" stroke-linecap="round" stroke-linejoin="round"><path d="M1 3l2-2h6v6l-2 2h-6z" fill="#f4f6f8" stroke="#66707c"/><path d="M1 3h6v6M7 3l2-2" fill="none" stroke="#66707c"/><path d="M1 3l2-2h6l-2 2z" fill="#7d8894"/></g>
<g transform="translate(393.75,73.25) scale(1.05)" stroke-width="1.1" stroke-linecap="round" stroke-linejoin="round"><path d="M1 3l2-2h6v6l-2 2h-6z" fill="#f4f6f8" stroke="#66707c"/><path d="M1 3h6v6M7 3l2-2" fill="none" stroke="#66707c"/><path d="M1 9h6l2-2" fill="none" stroke="#2f3642" stroke-width="1.3"/></g>
<g transform="translate(406.55,73.25) scale(1.05)" stroke-width="1.1" stroke-linecap="round" stroke-linejoin="round"><path d="M1 3l2-2h6v6l-2 2h-6z" fill="#f4f6f8" stroke="#66707c"/><path d="M1 3h6v6M7 3l2-2" fill="none" stroke="#66707c"/><path d="M1 3h6v6h-6z" fill="#f4f6f8" stroke="#66707c"/><path d="M1 3v6" stroke="#2f3642" stroke-width="1.4"/></g>
<g transform="translate(420.15,73.25) scale(1.05)" stroke-width="1.1" stroke-linecap="round" stroke-linejoin="round"><path d="M1 3l2-2h6v6l-2 2h-6z" fill="#f4f6f8" stroke="#66707c"/><path d="M1 3h6v6M7 3l2-2" fill="none" stroke="#66707c"/><path d="M7 3l2-2v6l-2 2z" fill="#a0a8b2"/></g>
<g transform="translate(433.75,73.25) scale(1.05)" stroke-width="1.1" stroke-linecap="round" stroke-linejoin="round"><path d="M1 3l2-2h6v6l-2 2h-6z" fill="#f4f6f8" stroke="#66707c"/><path d="M1 3h6v6M7 3l2-2" fill="none" stroke="#66707c"/><path d="M1 3h6v6h-6z" fill="#8d97a3"/></g>
<g transform="translate(446.55,73.25) scale(1.05)" stroke-width="1.1" stroke-linecap="round" stroke-linejoin="round"><path d="M1 3l2-2h6v6l-2 2h-6z" fill="#f4f6f8" stroke="#66707c"/><path d="M1 3h6v6M7 3l2-2" fill="none" stroke="#66707c"/><path d="M3 1h6v6h-6z" fill="#8d97a3"/></g>
<g transform="translate(463.15,73.25) scale(1.05)" stroke-width="1.1" stroke-linecap="round" stroke-linejoin="round"><path d="M5 0.8l4.2 3v3.2l-4.2 2.8l-4.2-2.8v-3.2z" fill="#f4f6f8" stroke="#2f3642" stroke-width="0.9"/><path d="M0.8 3.8l4.2 2.5l4.2-2.5M5 6.3v3.5" fill="none" stroke="#2f3642" stroke-width="0.7"/><path d="M0.8 3.8l4.2 2.5v3.5l-4.2-2.8z" fill="#3b4350"/></g>
<g transform="translate(476.75,73.25) scale(1.05)" stroke-width="1.1" stroke-linecap="round" stroke-linejoin="round"><path d="M5 0.8l4.2 3v3.2l-4.2 2.8l-4.2-2.8v-3.2z" fill="#f4f6f8" stroke="#2f3642" stroke-width="0.9"/><path d="M0.8 3.8l4.2 2.5l4.2-2.5M5 6.3v3.5" fill="none" stroke="#2f3642" stroke-width="0.7"/><path d="M9.2 3.8l-4.2 2.5v3.5l4.2-2.8z" fill="#3b4350"/></g>
<g transform="translate(489.55,73.25) scale(1.05)" stroke-width="1.1" stroke-linecap="round" stroke-linejoin="round"><path d="M5 0.8l4.2 3v3.2l-4.2 2.8l-4.2-2.8v-3.2z" fill="#f4f6f8" stroke="#2f3642" stroke-width="0.9"/><path d="M0.8 3.8l4.2 2.5l4.2-2.5M5 6.3v3.5" fill="none" stroke="#2f3642" stroke-width="0.7"/><path d="M5 0.8l4.2 3l-4.2 2.5z" fill="#3b4350"/></g>
<g transform="translate(503.05,73.25) scale(1.05)" stroke-width="1.1" stroke-linecap="round" stroke-linejoin="round"><path d="M5 0.8l4.2 3v3.2l-4.2 2.8l-4.2-2.8v-3.2z" fill="#f4f6f8" stroke="#2f3642" stroke-width="0.9"/><path d="M0.8 3.8l4.2 2.5l4.2-2.5M5 6.3v3.5" fill="none" stroke="#2f3642" stroke-width="0.7"/><path d="M5 0.8l-4.2 3l4.2 2.5z" fill="#3b4350"/></g>
<g transform="translate(520.05,73.25) scale(1.05)" stroke-width="1.1" stroke-linecap="round" stroke-linejoin="round"><rect x="1" y="3.5" width="7.5" height="6" fill="#eef1f4" stroke="#66707c"/><circle cx="4.8" cy="6.5" r="1.8" fill="none" stroke="#66707c"/><circle cx="8" cy="2" r="1.8" fill="#e8782a"/></g>
<g transform="translate(536.65,73.25) scale(1.05)" stroke-width="1.1" stroke-linecap="round" stroke-linejoin="round"><circle cx="4.5" cy="4.5" r="3.2" fill="#fff" stroke="#2f3642" stroke-width="1.1"/><path d="M6.8 6.8l2.7 2.7" stroke="#2f3642" stroke-width="1.6"/><path d="M2.5 4.5h4M2.5 4.5l1.5-1.5M2.5 4.5l1.5 1.5" stroke="#2f3642" stroke-width="1"/></g>
<g transform="translate(637.05,73.25) scale(1.05)" stroke-width="1.1" stroke-linecap="round" stroke-linejoin="round"><rect x="0.8" y="0.8" width="5.5" height="5.5" fill="#f4f6f8" stroke="#2f3642" stroke-width="0.9"/><circle cx="6" cy="6.2" r="3" fill="#fff" stroke="#2f3642" stroke-width="0.9"/></g>
<g transform="translate(653.05,73.25) scale(1.05)" stroke-width="1.1" stroke-linecap="round" stroke-linejoin="round"><circle cx="5" cy="5" r="4.2" fill="#f4f6f8" stroke="#2f3642" stroke-width="0.9"/><path d="M1.5 3.5l3.5 5l3.5-5z" fill="none" stroke="#2f3642" stroke-width="0.8"/></g>
<g transform="translate(666.15,73.25) scale(1.05)" stroke-width="1.1" stroke-linecap="round" stroke-linejoin="round"><circle cx="5" cy="5" r="4.2" fill="#f4f6f8" stroke="#2f3642" stroke-width="0.9"/><path d="M1.5 3.5l3.5 5l3.5-5z" fill="none" stroke="#2f3642" stroke-width="0.8"/></g>
<g transform="translate(679.35,73.25) scale(1.05)" stroke-width="1.1" stroke-linecap="round" stroke-linejoin="round"><circle cx="5" cy="5" r="4.3" fill="#2a72c8"/><circle cx="4" cy="3.6" r="1.6" fill="#8cc4f4"/></g>
<g transform="translate(692.45,73.25) scale(1.05)" stroke-width="1.1" stroke-linecap="round" stroke-linejoin="round"><circle cx="5" cy="5" r="4.3" fill="#5a3aa8"/><circle cx="4.8" cy="4" r="2.6" fill="#f0a020"/><circle cx="4.5" cy="3.3" r="1.2" fill="#ffe070"/></g>
<g transform="translate(709.45,73.25) scale(1.05)" stroke-width="1.1" stroke-linecap="round" stroke-linejoin="round"><circle cx="4.5" cy="4.5" r="3.8" fill="#fff" stroke="#2f3642" stroke-width="0.9"/><rect x="5" y="5.5" width="4.5" height="4" fill="#9aa2ad" stroke="#2f3642" stroke-width="0.7"/></g>
<line x1="142.8" y1="74" x2="142.8" y2="83" stroke="#d6d3c4" stroke-width="1"/>
<line x1="212.5" y1="74" x2="212.5" y2="83" stroke="#d6d3c4" stroke-width="1"/>
<line x1="255.8" y1="74" x2="255.8" y2="83" stroke="#d6d3c4" stroke-width="1"/>
<line x1="377.3" y1="74" x2="377.3" y2="83" stroke="#d6d3c4" stroke-width="1"/>
<line x1="460.3" y1="74" x2="460.3" y2="83" stroke="#d6d3c4" stroke-width="1"/>
<line x1="516.5" y1="74" x2="516.5" y2="83" stroke="#d6d3c4" stroke-width="1"/>
<line x1="533.4" y1="74" x2="533.4" y2="83" stroke="#d6d3c4" stroke-width="1"/>
<line x1="650.8" y1="74" x2="650.8" y2="83" stroke="#d6d3c4" stroke-width="1"/>
<line x1="706.2" y1="74" x2="706.2" y2="83" stroke="#d6d3c4" stroke-width="1"/>
<g transform="translate(5.55,93.95) scale(1.05)" stroke-width="1.1" stroke-linecap="round" stroke-linejoin="round"><path d="M1.5 8.5l7-7" stroke="#2f3642"/><circle cx="1.5" cy="8.5" r="0.9" fill="#2f3642"/><circle cx="8.5" cy="1.5" r="0.9" fill="#2f3642"/></g>
<g transform="translate(5.55,106.65) scale(1.05)" stroke-width="1.1" stroke-linecap="round" stroke-linejoin="round"><path d="M1 9l8-8" stroke="#2f3642" stroke-dasharray="2 1"/><circle cx="1.5" cy="8.5" r="1" fill="#2f3642"/><circle cx="8.5" cy="1.5" r="1" fill="#2f3642"/><circle cx="5" cy="5" r="0.8" fill="#2f3642"/></g>
<g transform="translate(5.55,119.35) scale(1.05)" stroke-width="1.1" stroke-linecap="round" stroke-linejoin="round"><path d="M1 7.5h5a2.5 2.5 0 0 0 0-5h-2" fill="none" stroke="#2f3642"/><path d="M5 1l-2 1.5l2 1.5" fill="none" stroke="#2f3642"/><circle cx="1" cy="7.5" r="1" fill="#2f3642"/></g>
<g transform="translate(5.55,132.05) scale(1.05)" stroke-width="1.1" stroke-linecap="round" stroke-linejoin="round"><path d="M5 0.8l4.2 3.1l-1.6 5h-5.2l-1.6-5z" fill="#e8ecf1" stroke="#2f3642"/></g>
<g transform="translate(5.55,144.75) scale(1.05)" stroke-width="1.1" stroke-linecap="round" stroke-linejoin="round"><rect x="1" y="2.5" width="8" height="5.5" fill="#e8ecf1" stroke="#2f3642"/><circle cx="1" cy="8" r="0.9" fill="#2f3642"/><circle cx="9" cy="2.5" r="0.9" fill="#2f3642"/></g>
<g transform="translate(5.55,157.45) scale(1.05)" stroke-width="1.1" stroke-linecap="round" stroke-linejoin="round"><path d="M1.5 9c0-4 3-7.5 7-7.5" fill="none" stroke="#2f3642"/><circle cx="1.5" cy="9" r="0.9" fill="#2f3642"/><circle cx="8.5" cy="1.5" r="0.9" fill="#2f3642"/></g>
<g transform="translate(5.55,170.15) scale(1.05)" stroke-width="1.1" stroke-linecap="round" stroke-linejoin="round"><circle cx="5" cy="5" r="4" fill="#eef1f4" stroke="#2f3642"/><path d="M5 5l2.5-2.5" stroke="#2f3642"/><circle cx="5" cy="5" r="0.8" fill="#2f3642"/></g>
<g transform="translate(5.55,182.85) scale(1.05)" stroke-width="1.1" stroke-linecap="round" stroke-linejoin="round"><path d="M3 2a1.6 1.6 0 0 1 3 0a1.6 1.6 0 0 1 2.5 2a1.6 1.6 0 0 1 0 3a1.6 1.6 0 0 1-2.5 2a1.6 1.6 0 0 1-3 0a1.6 1.6 0 0 1-2-2.5a1.6 1.6 0 0 1 0-2.5a1.6 1.6 0 0 1 2-2z" fill="#eef1f4" stroke="#2f3642" stroke-width="0.9"/></g>
<g transform="translate(5.55,195.55) scale(1.05)" stroke-width="1.1" stroke-linecap="round" stroke-linejoin="round"><path d="M1 8.5c2-5 3 1 4.5-3s2.5-3.5 3.5-4" fill="none" stroke="#2f3642"/></g>
<g transform="translate(5.55,208.25) scale(1.05)" stroke-width="1.1" stroke-linecap="round" stroke-linejoin="round"><ellipse cx="5" cy="5" rx="4.3" ry="2.6" fill="#eef1f4" stroke="#2f3642"/><circle cx="5" cy="5" r="0.8" fill="#2f3642"/></g>
<g transform="translate(5.55,220.95) scale(1.05)" stroke-width="1.1" stroke-linecap="round" stroke-linejoin="round"><path d="M1.5 6a4 2.5 0 1 1 6 2" fill="none" stroke="#2f3642"/><path d="M6.5 6.5l1 1.8l-2 0.5" fill="none" stroke="#2f3642"/></g>
<g transform="translate(5.55,233.65) scale(1.05)" stroke-width="1.1" stroke-linecap="round" stroke-linejoin="round"><path d="M1 2h5l1 3v1h-6z" fill="#eef1f4" stroke="#2f3642"/><circle cx="7" cy="7" r="2" fill="#fff" stroke="#2f3642"/><circle cx="6" cy="8.5" r="1" fill="#2f3642"/></g>
<g transform="translate(5.55,246.35) scale(1.05)" stroke-width="1.1" stroke-linecap="round" stroke-linejoin="round"><path d="M1 2h6v4h-6z" fill="#eef1f4" stroke="#2f3642"/><circle cx="7" cy="7.5" r="1.8" fill="#fff" stroke="#2f3642"/></g>
<g transform="translate(5.55,259.05) scale(1.05)" stroke-width="1.1" stroke-linecap="round" stroke-linejoin="round"><circle cx="5" cy="5" r="0.9" fill="#2f3642"/></g>
<g transform="translate(5.55,271.75) scale(1.05)" stroke-width="1.1" stroke-linecap="round" stroke-linejoin="round"><rect x="2" y="2" width="6" height="6" fill="#e3e7ec"/><path d="M2 0.5v9M8 0.5v9M0.5 2h9M0.5 8h9" stroke="#66707c" stroke-width="1"/><path d="M3 4h4M3 6h4" stroke="#9aa2ad" stroke-width="0.7"/></g>
<g transform="translate(5.55,284.45) scale(1.05)" stroke-width="1.1" stroke-linecap="round" stroke-linejoin="round"><rect x="2" y="2" width="6" height="6" fill="#c5ccd4"/><path d="M2 0.5v9M8 0.5v9M0.5 2h9M0.5 8h9" stroke="#66707c" stroke-width="1"/><path d="M3 3.5h4M3 5h4M3 6.5h4" stroke="#6a727e" stroke-width="0.7"/></g>
<g transform="translate(5.55,297.15) scale(1.05)" stroke-width="1.1" stroke-linecap="round" stroke-linejoin="round"><path d="M1 2.5h6l2.5 3l-2 3.5h-6.5z" fill="#f4f6f8" stroke="#66707c"/><ellipse cx="5" cy="6" rx="2.5" ry="1.8" fill="none" stroke="#2f3642"/></g>
<g transform="translate(5.55,309.85) scale(1.05)" stroke-width="1.1" stroke-linecap="round" stroke-linejoin="round"><rect x="1" y="1" width="8" height="8" fill="#fff" stroke="#2f3642"/><path d="M1 3h8M1 5h8M1 7h8M3.7 1v8M6.3 1v8" stroke="#2f3642" stroke-width="0.6"/></g>
<g transform="translate(5.55,322.55) scale(1.05)" stroke-width="1.1" stroke-linecap="round" stroke-linejoin="round"><text x="5" y="9.5" font-family="Liberation Sans" font-size="11.5" text-anchor="middle" fill="#2a2a2a" stroke="none" textLength="8" lengthAdjust="spacingAndGlyphs">A</text></g>
<g transform="translate(21.55,93.95) scale(1.05)" stroke-width="1.1" stroke-linecap="round" stroke-linejoin="round"><path d="M2.5 7.5l6-6.5" stroke="#e8c070" stroke-width="2.6"/><path d="M2.5 7.5l6-6.5" stroke="#a07a30" stroke-width="0.6"/><circle cx="2.5" cy="7.5" r="1.5" fill="#d0392b"/><path d="M0.5 9.5h9" stroke="#2f3642" stroke-width="0.8"/></g>
<g transform="translate(21.55,106.65) scale(1.05)" stroke-width="1.1" stroke-linecap="round" stroke-linejoin="round"><circle cx="3" cy="2.5" r="2" fill="none" stroke="#2f3642" stroke-width="0.9"/><path d="M6 1a2 2 0 0 1 2 2" fill="none" stroke="#2f3642"/><ellipse cx="6" cy="7" rx="3.5" ry="2.3" transform="rotate(-35 6 7)" fill="#bcdcf8" stroke="#3c82d6" stroke-width="1.2"/></g>
<g transform="translate(21.55,119.35) scale(1.05)" stroke-width="1.1" stroke-linecap="round" stroke-linejoin="round"><path d="M4.5 0.5l-4 8.5h4z" fill="#e3e6ea" stroke="#2f3642" stroke-width="0.9"/><path d="M5.5 0.5l4 8.5h-4z" fill="#8cc0ee" stroke="#3c82d6" stroke-width="0.9"/><path d="M5 0v10" stroke="#2f3642" stroke-width="0.6"/></g>
<g transform="translate(21.55,132.05) scale(1.05)" stroke-width="1.1" stroke-linecap="round" stroke-linejoin="round"><path d="M1 9v-4a3 3 0 0 1 6 0v1h2v3z" fill="#9cc8ee" stroke="#3c82d6"/><path d="M2.5 8v-3a1.8 1.8 0 0 1 3.5 0v2" fill="#fff" stroke="#2f3642" stroke-width="0.9"/></g>
<g transform="translate(21.55,144.75) scale(1.05)" stroke-width="1.1" stroke-linecap="round" stroke-linejoin="round"><path d="M1 1h3v3h-3zM6 1h3v3h-3z" fill="#fff" stroke="#66707c"/><path d="M1 6h3v3h-3zM6 6h3v3h-3z" fill="#fff" stroke="#3c82d6" stroke-width="1.3"/><path d="M6 1h3v3h-3z" fill="#fff" stroke="#3c82d6" stroke-width="1.3"/></g>
<g transform="translate(21.55,157.45) scale(1.05)" stroke-width="1.1" stroke-linecap="round" stroke-linejoin="round"><path d="M5 0.5v9M0.5 5h9" stroke="#2f3642" stroke-width="1.1"/><path d="M3.5 2l1.5-1.5l1.5 1.5M3.5 8l1.5 1.5l1.5-1.5M2 3.5l-1.5 1.5l1.5 1.5M8 3.5l1.5 1.5l-1.5 1.5" fill="none" stroke="#2f3642" stroke-width="1.1"/></g>
<g transform="translate(21.55,170.15) scale(1.05)" stroke-width="1.1" stroke-linecap="round" stroke-linejoin="round"><circle cx="5" cy="5.5" r="3.8" fill="none" stroke="#2f3642" stroke-width="1.1"/><path d="M3 0.5l2.5 1.2l-2 1.8" fill="none" stroke="#2f3642"/></g>
<g transform="translate(21.55,182.85) scale(1.05)" stroke-width="1.1" stroke-linecap="round" stroke-linejoin="round"><rect x="0.8" y="0.8" width="8.4" height="8.4" fill="#bcdcf8" stroke="#3c82d6" stroke-width="1.2"/><rect x="0.8" y="4.5" width="4.5" height="4.5" fill="#fff" stroke="#2f3642"/></g>
<g transform="translate(21.55,195.55) scale(1.05)" stroke-width="1.1" stroke-linecap="round" stroke-linejoin="round"><path d="M1 0.8h5.5l2.5 8.4h-8z" fill="#fff" stroke="#3c82d6" stroke-width="1.1"/><path d="M2 1v8" stroke="#2f3642"/><path d="M4 6h3" stroke="#2f3642" stroke-width="1.2"/></g>
<g transform="translate(21.55,208.25) scale(1.05)" stroke-width="1.1" stroke-linecap="round" stroke-linejoin="round"><path d="M0.5 5.5h3M6.5 4.5h3" stroke="#3c82d6" stroke-width="1.2"/><path d="M3 9l4-8" stroke="#3c82d6" stroke-width="1.2"/></g>
<g transform="translate(21.55,220.95) scale(1.05)" stroke-width="1.1" stroke-linecap="round" stroke-linejoin="round"><path d="M0.5 6h2M3.5 6h2" stroke="#3c82d6" stroke-width="1.2"/><path d="M6 9.5l3.5-8.5" stroke="#3c82d6" stroke-width="1.2"/></g>
<g transform="translate(21.55,233.65) scale(1.05)" stroke-width="1.1" stroke-linecap="round" stroke-linejoin="round"><rect x="1" y="2.5" width="8" height="6" fill="#fff" stroke="#2f3642"/><path d="M1 2.5h8" stroke="#fff" stroke-width="1.5"/><path d="M1 2.5h3M6 2.5h3" stroke="#2f3642"/><circle cx="7" cy="2" r="1" fill="#3c82d6"/></g>
<g transform="translate(21.55,246.35) scale(1.05)" stroke-width="1.1" stroke-linecap="round" stroke-linejoin="round"><rect x="1" y="2.5" width="8" height="6.5" fill="#fff" stroke="#2f3642"/><path d="M2 2.5h6" stroke="#fff" stroke-width="1.5"/><circle cx="2" cy="2.5" r="1" fill="#3c82d6"/><circle cx="8" cy="2.5" r="1" fill="#3c82d6"/></g>
<g transform="translate(21.55,259.05) scale(1.05)" stroke-width="1.1" stroke-linecap="round" stroke-linejoin="round"><path d="M0.5 5h3M6.5 5h3" stroke="#3c82d6" stroke-width="1.3"/><path d="M3 4l1.5 1l-1.5 1M7 4l-1.5 1l1.5 1" fill="none" stroke="#3c82d6" stroke-width="1.1"/></g>
<g transform="translate(21.55,271.75) scale(1.05)" stroke-width="1.1" stroke-linecap="round" stroke-linejoin="round"><path d="M1.5 9.5v-4l4-4.5h4" fill="none" stroke="#3c82d6" stroke-width="1.1"/><path d="M3 9.5v-4.5l3-3h3.5v8z" fill="#fff" stroke="#2f3642" stroke-width="0.8"/></g>
<g transform="translate(21.55,284.45) scale(1.05)" stroke-width="1.1" stroke-linecap="round" stroke-linejoin="round"><path d="M1.5 9.5v-4a4.5 4.5 0 0 1 4.5-4.5h3.5" fill="none" stroke="#3c82d6" stroke-width="1.1"/><path d="M3 9.5v-3.5a3 3 0 0 1 3-3h3.5v6.5z" fill="#fff" stroke="#2f3642" stroke-width="0.8"/></g>
<g transform="translate(21.55,297.15) scale(1.05)" stroke-width="1.1" stroke-linecap="round" stroke-linejoin="round"><path d="M1 4.5l3-3l2.5 2l-3 3z" fill="#8cc0ee" stroke="#3c82d6"/><path d="M3 8l3-2.5l3 2l-3 2z" fill="#8cc0ee" stroke="#3c82d6"/><path d="M6 1l3 1.5l-1 2.5" fill="none" stroke="#3c82d6"/></g>
<g transform="translate(21.55,315.75) scale(1.05)" stroke-width="1.1" stroke-linecap="round" stroke-linejoin="round"><rect x="0.8" y="0.8" width="6.5" height="5" fill="#eef1f4" stroke="#2f3642" stroke-width="0.9"/><rect x="2.8" y="3.8" width="6.5" height="5" fill="#c8d0da" stroke="#2f3642" stroke-width="0.9"/></g>
<g transform="translate(21.55,331.75) scale(1.05)" stroke-width="1.1" stroke-linecap="round" stroke-linejoin="round"><rect x="1" y="1" width="7" height="7.5" fill="none" stroke="#66707c" stroke-dasharray="1.2 0.8"/><path d="M3 8l5.5-6" stroke="#e8a040" stroke-width="2"/><path d="M2.5 9l1-1" stroke="#2f3642" stroke-width="1.2"/></g>
<g transform="translate(21.55,344.05) scale(1.05)" stroke-width="1.1" stroke-linecap="round" stroke-linejoin="round"><path d="M1 8a2 2 0 0 1 2-3a2.5 2.5 0 0 1 4.5 0a2 2 0 0 1 1.5 3z" fill="none" stroke="#66707c" stroke-width="0.9"/><path d="M2 6.5l5-5" stroke="#e8a040" stroke-width="1.8"/></g>
<g transform="translate(21.55,358.05) scale(1.05)" stroke-width="1.1" stroke-linecap="round" stroke-linejoin="round"><path d="M1 7c2-4 6-4 7-2s-3 3-5 4" fill="none" stroke="#66707c" stroke-width="0.9"/><path d="M2 8l6-6" stroke="#e8a040" stroke-width="1.8"/><path d="M1.5 9l1-1" stroke="#2f3642"/></g>
<g transform="translate(21.55,373.25) scale(1.05)" stroke-width="1.1" stroke-linecap="round" stroke-linejoin="round"><path d="M0.5 1.5l4.5 2.5l4.5-2.5M1 1.5l4 7l4-7" fill="none" stroke="#66707c" stroke-width="0.9"/><path d="M4 5l5-4" stroke="#e8a040" stroke-width="1.8"/></g>
<g transform="translate(21.55,386.45) scale(1.05)" stroke-width="1.1" stroke-linecap="round" stroke-linejoin="round"><rect x="4" y="0.5" width="5" height="4" fill="#eef1f4" stroke="#66707c" stroke-width="0.9"/><rect x="0.8" y="4.5" width="4" height="4" fill="#eef1f4" stroke="#66707c" stroke-width="0.9"/><path d="M4.8 6.5h2.5v-2" fill="none" stroke="#66707c"/></g>
<g transform="translate(21.55,398.75) scale(1.05)" stroke-width="1.1" stroke-linecap="round" stroke-linejoin="round"><path d="M0.5 1.5l4.5 2.5l4.5-2.5M1 1.5l4 7l4-7" fill="none" stroke="#66707c" stroke-width="0.9"/><circle cx="7" cy="6" r="1.8" fill="none" stroke="#3a9a3a" stroke-width="1.1"/></g>
<g transform="translate(21.55,410.75) scale(1.05)" stroke-width="1.1" stroke-linecap="round" stroke-linejoin="round"><rect x="0.8" y="0.8" width="5" height="8" fill="#eef1f4" stroke="#66707c" stroke-width="0.9"/><path d="M2 3h2.5M2 5h2.5M2 7h2.5" stroke="#3c82d6"/><path d="M5 4h3.5l-1.3-1.3M8.5 4l-1.3 1.3" fill="none" stroke="#3c82d6" stroke-width="1.2"/><rect x="5" y="6" width="4.5" height="3.5" fill="#bcdcf8" stroke="#3c82d6" stroke-width="0.8"/></g>
<line x1="22" y1="328.6" x2="32" y2="328.6" stroke="#d6d3c4" stroke-width="1"/>
<line x1="22" y1="370.5" x2="32" y2="370.5" stroke="#d6d3c4" stroke-width="1"/>
<g transform="translate(649.75,93.75) scale(1.05)" stroke-width="1.1" stroke-linecap="round" stroke-linejoin="round"><path d="M0.8 5h5" stroke="#2f3642"/><circle cx="7.5" cy="5" r="1.6" fill="#fff" stroke="#e8703a" stroke-width="1.1"/></g>
<g transform="translate(649.75,104.25) scale(1.05)" stroke-width="1.1" stroke-linecap="round" stroke-linejoin="round"><path d="M1.5 9v-5h4" fill="none" stroke="#2f3642" stroke-dasharray="1 0.8"/><circle cx="7" cy="3.5" r="1.6" fill="#fff" stroke="#e8703a" stroke-width="1.1"/><circle cx="1.5" cy="9" r="0.9" fill="#2f3642"/></g>
<g transform="translate(649.75,123.45) scale(1.05)" stroke-width="1.1" stroke-linecap="round" stroke-linejoin="round"><path d="M1 9l6.5-6.5" stroke="#2f3642"/><circle cx="7.5" cy="2.5" r="1.8" fill="#fff" stroke="#e8703a" stroke-width="1.2"/><circle cx="1.5" cy="8.5" r="1.6" fill="#fff" stroke="#e8703a" stroke-width="1.1"/></g>
<g transform="translate(649.75,134.75) scale(1.05)" stroke-width="1.1" stroke-linecap="round" stroke-linejoin="round"><path d="M1 9l8-8" stroke="#2f3642"/><circle cx="5" cy="5" r="1.6" fill="#fff" stroke="#e8703a" stroke-width="1.2"/></g>
<g transform="translate(649.75,146.75) scale(1.05)" stroke-width="1.1" stroke-linecap="round" stroke-linejoin="round"><path d="M1 1l8 8M9 1l-8 8" stroke="#2f3642"/><circle cx="5" cy="5" r="1.5" fill="#fff" stroke="#e8703a" stroke-width="1.1"/></g>
<g transform="translate(649.75,159.75) scale(1.05)" stroke-width="1.1" stroke-linecap="round" stroke-linejoin="round"><path d="M1 1l8 8M9 1l-8 8" stroke="#2f3642" stroke-dasharray="1.2 0.8"/><circle cx="5" cy="5" r="1.5" fill="#fff" stroke="#e8703a" stroke-width="1.1"/></g>
<g transform="translate(649.75,172.75) scale(1.05)" stroke-width="1.1" stroke-linecap="round" stroke-linejoin="round"><path d="M0.5 5h9" stroke="#2f3642" stroke-dasharray="2 1"/></g>
<g transform="translate(649.75,189.35) scale(1.05)" stroke-width="1.1" stroke-linecap="round" stroke-linejoin="round"><circle cx="5" cy="5" r="3.8" fill="none" stroke="#2f3642"/><circle cx="5" cy="5" r="1.3" fill="#fff" stroke="#e8703a" stroke-width="1.1"/></g>
<g transform="translate(649.75,201.25) scale(1.05)" stroke-width="1.1" stroke-linecap="round" stroke-linejoin="round"><path d="M5 0.8l4.2 4.2l-4.2 4.2l-4.2-4.2z" fill="none" stroke="#e8703a" stroke-width="1.2"/><circle cx="5" cy="0.8" r="1.2" fill="#fff" stroke="#e8703a"/><circle cx="9.2" cy="5" r="1.2" fill="#fff" stroke="#e8703a"/><circle cx="5" cy="9.2" r="1.2" fill="#fff" stroke="#e8703a"/><circle cx="0.8" cy="5" r="1.2" fill="#fff" stroke="#e8703a"/></g>
<g transform="translate(649.75,215.05) scale(1.05)" stroke-width="1.1" stroke-linecap="round" stroke-linejoin="round"><circle cx="5.5" cy="5.5" r="3.8" fill="none" stroke="#2f3642"/><path d="M0.5 1.5h5" stroke="#2f3642"/><circle cx="3" cy="2" r="1.5" fill="#fff" stroke="#e8703a" stroke-width="1.1"/></g>
<g transform="translate(649.75,232.35) scale(1.05)" stroke-width="1.1" stroke-linecap="round" stroke-linejoin="round"><path d="M0.5 7h9M5 0.5v6.5" stroke="#2f3642"/><circle cx="5" cy="7" r="1.5" fill="#fff" stroke="#e8703a" stroke-width="1.1"/></g>
<g transform="translate(649.75,243.45) scale(1.05)" stroke-width="1.1" stroke-linecap="round" stroke-linejoin="round"><path d="M1 8l6-6M3 9.5l6-6" stroke="#2f3642"/></g>
<g transform="translate(649.75,257.75) scale(1.05)" stroke-width="1.1" stroke-linecap="round" stroke-linejoin="round"><path d="M1.5 3h5l2.5 2.5l-2.5 2.5h-5z" fill="none" stroke="#2f3642"/><circle cx="2" cy="7" r="1.4" fill="#fff" stroke="#e8703a" stroke-width="1.1"/></g>
<g transform="translate(649.75,268.85) scale(1.05)" stroke-width="1.1" stroke-linecap="round" stroke-linejoin="round"><circle cx="5" cy="5" r="1.3" fill="#fff" stroke="#e8703a" stroke-width="1.1"/></g>
<g transform="translate(649.75,285.15) scale(1.05)" stroke-width="1.1" stroke-linecap="round" stroke-linejoin="round"><path d="M1 9l8-8" stroke="#2f3642"/><circle cx="5" cy="5" r="1.5" fill="#fff" stroke="#e8703a" stroke-width="1.1"/><path d="M6 2h3v3" fill="none" stroke="#e8703a"/></g>
<g transform="translate(649.75,297.25) scale(1.05)" stroke-width="1.1" stroke-linecap="round" stroke-linejoin="round"><path d="M2 1v8M5 1v8" stroke="#66707c" stroke-width="0.9"/><path d="M1 4h5M1 7h5" stroke="#66707c" stroke-width="0.6"/><path d="M5.5 1.5l3.5 3.5M9 1.5l-3.5 3.5" stroke="#d0392b" stroke-width="1.2"/></g>
<g transform="translate(649.75,313.25) scale(1.05)" stroke-width="1.1" stroke-linecap="round" stroke-linejoin="round"><path d="M1.5 9.5v-5a3 3 0 0 1 6 0v5" fill="none" stroke="#8a2020" stroke-width="2.4"/><path d="M1.5 9.5v-5a3 3 0 0 1 6 0v5" fill="none" stroke="#c83030" stroke-width="1.2"/><rect x="7.5" y="7" width="2.5" height="2.5" fill="#2f3642"/></g>
<line x1="650" y1="119.5" x2="660" y2="119.5" stroke="#d6d3c4" stroke-width="1"/>
<line x1="650" y1="185.5" x2="660" y2="185.5" stroke="#d6d3c4" stroke-width="1"/>
<line x1="650" y1="228.4" x2="660" y2="228.4" stroke="#d6d3c4" stroke-width="1"/>
<line x1="650" y1="283.2" x2="660" y2="283.2" stroke="#d6d3c4" stroke-width="1"/>
<line x1="650" y1="311.7" x2="660" y2="311.7" stroke="#d6d3c4" stroke-width="1"/>
<g transform="translate(666.25,93.95) scale(1.05)" stroke-width="1.1" stroke-linecap="round" stroke-linejoin="round"><path d="M1 1v8M9 1v8M1 2.5h8" stroke="#2f3642" stroke-width="0.9"/></g>
<g transform="translate(666.25,105.15) scale(1.05)" stroke-width="1.1" stroke-linecap="round" stroke-linejoin="round"><path d="M1 3l3 -2M6 9l3-2M2.5 2l5 6" stroke="#2f3642" stroke-width="0.9"/></g>
<g transform="translate(666.25,118.35) scale(1.05)" stroke-width="1.1" stroke-linecap="round" stroke-linejoin="round"><path d="M1.5 9a7.5 7.5 0 0 1 7.5-7.5" fill="none" stroke="#2f3642" stroke-width="1.1"/><path d="M3 9a6 6 0 0 1 6-6" fill="none" stroke="#66707c" stroke-width="0.7"/><path d="M8 0.5l1.5 1l-1.5 1" fill="#2f3642"/></g>
<g transform="translate(666.25,132.55) scale(1.05)" stroke-width="1.1" stroke-linecap="round" stroke-linejoin="round"><path d="M1 9h8M5 3v6" stroke="#66707c" stroke-width="0.8"/><circle cx="1.5" cy="1.5" r="0.9" fill="#3c82d6"/><circle cx="5" cy="1.5" r="0.9" fill="#3c82d6"/><circle cx="8.5" cy="1.5" r="0.9" fill="#3c82d6"/><path d="M2 5h6" stroke="#3c82d6" stroke-dasharray="1 1"/></g>
<g transform="translate(666.25,148.75) scale(1.05)" stroke-width="1.1" stroke-linecap="round" stroke-linejoin="round"><circle cx="5" cy="5" r="4" fill="#f4f6f8" stroke="#2f3642" stroke-width="0.9"/><path d="M5 5l-2.5-2.5" stroke="#2f3642" stroke-width="0.9"/></g>
<g transform="translate(666.25,160.95) scale(1.05)" stroke-width="1.1" stroke-linecap="round" stroke-linejoin="round"><path d="M1 6a4 4 0 0 1 6-4" fill="none" stroke="#2f3642" stroke-width="0.9"/><path d="M5 9l2-4l-2-1.5" fill="none" stroke="#2f3642"/></g>
<g transform="translate(666.25,173.15) scale(1.05)" stroke-width="1.1" stroke-linecap="round" stroke-linejoin="round"><circle cx="5" cy="5" r="4" fill="#f4f6f8" stroke="#2f3642" stroke-width="0.9"/><path d="M2 8l6-6" stroke="#2f3642" stroke-width="0.9"/></g>
<g transform="translate(666.25,185.35) scale(1.05)" stroke-width="1.1" stroke-linecap="round" stroke-linejoin="round"><path d="M1 9h8M1 9l5-8" stroke="#2f3642" stroke-width="0.9"/><path d="M6 9a5 5 0 0 0-2-4" fill="none" stroke="#2f3642" stroke-width="0.8"/></g>
<g transform="translate(666.25,202.45) scale(1.05)" stroke-width="1.1" stroke-linecap="round" stroke-linejoin="round"><path d="M1 1v8M9 1v8M1 2.5h8" stroke="#2f3642" stroke-width="0.9"/><path d="M5 4l0.8 2l2 0.6l-2 0.6l-0.8 2l-0.8-2l-2-0.6l2-0.6z" fill="#f0a020"/></g>
<g transform="translate(666.25,215.05) scale(1.05)" stroke-width="1.1" stroke-linecap="round" stroke-linejoin="round"><path d="M1 1v8M9 4v5M1 2.5h8M1 5h5" stroke="#2f3642" stroke-width="0.9"/><path d="M6 5v4" stroke="#2f3642" stroke-width="0.9"/></g>
<g transform="translate(666.25,227.25) scale(1.05)" stroke-width="1.1" stroke-linecap="round" stroke-linejoin="round"><path d="M1 1v8M5 1v8M9 1v8M1 3h8" stroke="#2f3642" stroke-width="0.9"/></g>
<g transform="translate(666.25,238.45) scale(1.05)" stroke-width="1.1" stroke-linecap="round" stroke-linejoin="round"><path d="M1 1v8M9 1v8M1 5h8" stroke="#2f3642" stroke-width="0.9"/><rect x="3" y="2" width="4" height="6" fill="#e8a020"/></g>
<g transform="translate(666.25,252.65) scale(1.05)" stroke-width="1.1" stroke-linecap="round" stroke-linejoin="round"><path d="M1 5h2M7 5h2M5 1v3M5 6v3" stroke="#2f3642" stroke-width="0.9"/><path d="M4 8.5h2" stroke="#2f3642" stroke-width="1.3"/></g>
<g transform="translate(666.25,269.85) scale(1.05)" stroke-width="1.1" stroke-linecap="round" stroke-linejoin="round"><rect x="0.8" y="2" width="8.5" height="6" fill="#fff" stroke="#2f3642" stroke-width="0.9"/><rect x="1.5" y="3" width="3" height="4" fill="#2f3642"/><path d="M6.5 3v4M6 5h2" stroke="#2f3642"/></g>
<g transform="translate(666.25,282.05) scale(1.05)" stroke-width="1.1" stroke-linecap="round" stroke-linejoin="round"><circle cx="5" cy="5" r="4" fill="none" stroke="#2f3642" stroke-width="0.9"/><path d="M3 5h4M5 3v4" stroke="#2f3642"/></g>
<g transform="translate(666.25,294.25) scale(1.05)" stroke-width="1.1" stroke-linecap="round" stroke-linejoin="round"><path d="M1 2v7M9 2v7M1 8h8" stroke="#2f3642" stroke-width="0.9"/><path d="M3 4l1.5 1.5l3-3" stroke="#20a020" stroke-width="1.5" fill="none"/></g>
<g transform="translate(666.25,306.45) scale(1.05)" stroke-width="1.1" stroke-linecap="round" stroke-linejoin="round"><path d="M0.5 5h3l1-3l1.5 6l1-3h2.5" fill="none" stroke="#2f3642" stroke-width="0.9"/></g>
<g transform="translate(666.25,324.15) scale(1.05)" stroke-width="1.1" stroke-linecap="round" stroke-linejoin="round"><path d="M1 5v5M9 5v5M1 8.5h8" stroke="#2f3642" stroke-width="0.9"/><path d="M3 7l5-5.5" stroke="#e8a040" stroke-width="2"/></g>
<g transform="translate(666.25,335.35) scale(1.05)" stroke-width="1.1" stroke-linecap="round" stroke-linejoin="round"><path d="M1 5v5M9 5v5M1 8.5h8" stroke="#2f3642" stroke-width="0.9"/><text x="5" y="6" font-family="Liberation Sans" font-size="6.5" text-anchor="middle" fill="#2f3642" stroke="none">A</text></g>
<g transform="translate(666.25,348.55) scale(1.05)" stroke-width="1.1" stroke-linecap="round" stroke-linejoin="round"><path d="M1 1v8M9 1v8M1 2h8" stroke="#2f3642" stroke-width="0.9"/><circle cx="5" cy="6" r="1.7" fill="none" stroke="#3a9a3a" stroke-width="1.1"/></g>
<g transform="translate(666.25,364.75) scale(1.05)" stroke-width="1.1" stroke-linecap="round" stroke-linejoin="round"><path d="M1 6v4M9 6v4M1 8.5h8" stroke="#2f3642" stroke-width="0.9"/><path d="M2 8c2-1 4-2.5 5-4.5l2-3" stroke="#b05a20" stroke-width="2" fill="none"/></g>
<line x1="666" y1="145" x2="677" y2="145" stroke="#d6d3c4" stroke-width="1"/>
<line x1="666" y1="199" x2="677" y2="199" stroke="#d6d3c4" stroke-width="1"/>
<line x1="666" y1="266" x2="677" y2="266" stroke="#d6d3c4" stroke-width="1"/>
<line x1="666" y1="320.3" x2="677" y2="320.3" stroke="#d6d3c4" stroke-width="1"/>
<line x1="666" y1="363" x2="677" y2="363" stroke="#d6d3c4" stroke-width="1"/>
<path d="M4.7 26.9 L7.3 6.4 L10.6 6.4 L21.2 23.5 Z" fill="#e2252a"/><path d="M4.7 26.9 L7.3 6.4 L8.5 6.4 L6.3 26.5 Z" fill="#ba161b"/><path d="M10.3 11.8 L11 11.2 L14.2 17.6 L10 18.2 Z" fill="#7a2a2a"/><path d="M8.6 21.4 L16.3 20.4 L17.6 22.8 L8.4 23.8 Z" fill="#a51418"/><path d="M4.7 26.9 L21.2 23.5 L20.6 22.6 L5.2 25.8 Z" fill="#c01a1e"/>
<path d="M18.5 34.5h3.5l-1.75 1.9z" fill="#111"/>
<g transform="translate(29.6,9)" stroke-linecap="round" stroke-linejoin="round"><path d="M1 2h6l2 2v5h-8z" fill="#f0f0f0" stroke="#4a4a4a" stroke-width="0.9"/></g>
<g transform="translate(41.8,9)" stroke-linecap="round" stroke-linejoin="round"><path d="M0.8 2.5h3l1 1h3v1.5h-6.5z" fill="#d8d8d8" stroke="#4a4a4a" stroke-width="0.8"/><path d="M0.8 8.5l1.5-4h7.5l-1.5 4z" fill="#e8e8e8" stroke="#4a4a4a" stroke-width="0.8"/></g>
<g transform="translate(54.8,9)" stroke-linecap="round" stroke-linejoin="round"><rect x="1.5" y="1" width="7" height="8.5" rx="0.5" fill="#3d4a60" stroke="#2a3344" stroke-width="0.8"/><rect x="3" y="1.5" width="4" height="2.5" fill="#e8ecf2"/><rect x="3" y="6" width="4" height="3" fill="#e8ecf2"/></g>
<g transform="translate(67.8,9)" stroke-linecap="round" stroke-linejoin="round"><rect x="2.5" y="0.8" width="5" height="3" fill="#f0f0f0" stroke="#333" stroke-width="0.8"/><path d="M0.8 4h8.4v3.5h-8.4z" fill="#e0e0e0" stroke="#333" stroke-width="0.9"/><rect x="2.5" y="6.5" width="5" height="3" fill="#d8e4f0" stroke="#333" stroke-width="0.8"/></g>
<g transform="translate(80.7,9)" stroke-linecap="round" stroke-linejoin="round"><path d="M9 8.5c0-3-1.8-5-4.8-5h-1" fill="none" stroke="#eeeeee" stroke-width="1.7"/><path d="M0.6 3.5l3.2-2.8v5.6z" fill="#eeeeee"/></g>
<g transform="translate(92.6,9)" stroke-linecap="round" stroke-linejoin="round"><path d="M1 8.5c0-3 1.8-5 4.8-5h1" fill="none" stroke="#a4a4a4" stroke-width="1.7"/><path d="M9.4 3.5l-3.2-2.8v5.6z" fill="#a4a4a4"/></g>
<path d="M686 13.2h6.5" stroke="#eee" stroke-width="2.2"/><rect x="704.8" y="10.8" width="6" height="4.4" fill="none" stroke="#eee" stroke-width="1.4"/><path d="M704.8 11.3h6" stroke="#eee" stroke-width="1.8"/><path d="M723.3 10.3l5.2 5M728.5 10.3l-5.2 5" stroke="#eee" stroke-width="1.7"/>
<path d="M688.5 32.3h6.3" stroke="#ddd" stroke-width="2"/><rect x="705.5" y="29.5" width="5" height="4.5" fill="none" stroke="#ddd" stroke-width="1.3"/><path d="M707.5 29.5v-1.5h5v4.5h-1.5" fill="none" stroke="#ddd" stroke-width="1.1"/><path d="M723.3 28.3l5.5 5.5M728.8 28.3l-5.5 5.5" stroke="#ddd" stroke-width="1.6"/>
<path d="M497 9.5v4l3-2z" fill="#eee"/>
<text x="504" y="14.9" font-family="Liberation Sans" font-size="8.5" font-weight="400" font-style="normal" fill="#aeaca0" textLength="123.0" lengthAdjust="spacingAndGlyphs">Введите ключевое слово или фр</text>
<circle cx="634.3" cy="11" r="2.6" fill="none" stroke="#222" stroke-width="1.2"/><path d="M636.2 12.9l2.3 2.3" stroke="#222" stroke-width="1.6"/><path d="M644.5 11.5h2l-1 1z" fill="#333"/>
<text x="655" y="15.5" font-family="Liberation Serif" font-style="italic" font-weight="700" font-size="10" text-anchor="middle" fill="#4a5a70">S</text><path d="M669 7.8l1 2.6h2.7l-2.2 1.7l0.9 2.7l-2.4-1.7l-2.4 1.7l0.9-2.7l-2.2-1.7h2.7z" fill="none" stroke="#222" stroke-width="0.9"/>
<text x="304.5" y="16.6" font-family="Liberation Sans" font-size="9.5" font-weight="700" font-style="normal" fill="#c4c4c4" textLength="61.5" lengthAdjust="spacingAndGlyphs">AutoCAD 2009</text>
<text x="369" y="16.6" font-family="Liberation Sans" font-size="9.5" font-weight="700" font-style="normal" fill="#f4f4f4" textLength="77.5" lengthAdjust="spacingAndGlyphs">лекции ТЭФ.dwg</text>
<text x="31" y="33.7" font-family="Liberation Sans" font-size="8.5" font-weight="400" font-style="normal" fill="#ececec" textLength="19.9" lengthAdjust="spacingAndGlyphs">Файл</text>
<text x="63.9" y="33.7" font-family="Liberation Sans" font-size="8.5" font-weight="400" font-style="normal" fill="#ececec" textLength="26.0" lengthAdjust="spacingAndGlyphs">Правка</text>
<text x="102.5" y="33.7" font-family="Liberation Sans" font-size="8.5" font-weight="400" font-style="normal" fill="#ececec" textLength="14.4" lengthAdjust="spacingAndGlyphs">Вид</text>
<text x="129.6" y="33.7" font-family="Liberation Sans" font-size="8.5" font-weight="400" font-style="normal" fill="#ececec" textLength="30.6" lengthAdjust="spacingAndGlyphs">Вставка</text>
<text x="172.1" y="33.7" font-family="Liberation Sans" font-size="8.5" font-weight="400" font-style="normal" fill="#ececec" textLength="29.2" lengthAdjust="spacingAndGlyphs">Формат</text>
<text x="214.5" y="33.7" font-family="Liberation Sans" font-size="8.5" font-weight="400" font-style="normal" fill="#ececec" textLength="26.8" lengthAdjust="spacingAndGlyphs">Сервис</text>
<text x="254.5" y="33.7" font-family="Liberation Sans" font-size="8.5" font-weight="400" font-style="normal" fill="#ececec" textLength="39.3" lengthAdjust="spacingAndGlyphs">Рисование</text>
<text x="307" y="33.7" font-family="Liberation Sans" font-size="8.5" font-weight="400" font-style="normal" fill="#ececec" textLength="31.8" lengthAdjust="spacingAndGlyphs">Размеры</text>
<text x="352" y="33.7" font-family="Liberation Sans" font-size="8.5" font-weight="400" font-style="normal" fill="#ececec" textLength="56.8" lengthAdjust="spacingAndGlyphs">Редактировать</text>
<text x="422" y="33.7" font-family="Liberation Sans" font-size="8.5" font-weight="400" font-style="normal" fill="#ececec" textLength="19.3" lengthAdjust="spacingAndGlyphs">Окно</text>
<text x="454.5" y="33.7" font-family="Liberation Sans" font-size="8.5" font-weight="400" font-style="normal" fill="#ececec" textLength="30.5" lengthAdjust="spacingAndGlyphs">Справка</text>
<text x="498" y="33.7" font-family="Liberation Sans" font-size="8.5" font-weight="400" font-style="normal" fill="#ececec" textLength="28.3" lengthAdjust="spacingAndGlyphs">Express</text>
<path d="M456.5 46.5 l2 2 l2 -2" stroke="#4d6185" stroke-width="1.3" fill="none"/>
<path d="M542.0 46.5 l2 2 l2 -2" stroke="#4d6185" stroke-width="1.3" fill="none"/>
<path d="M629.0 46.5 l2 2 l2 -2" stroke="#4d6185" stroke-width="1.3" fill="none"/>
<path d="M714.5 46.5 l2 2 l2 -2" stroke="#4d6185" stroke-width="1.3" fill="none"/>
<text x="405.7" y="51.1" font-family="Liberation Sans" font-size="8.5" font-weight="400" font-style="normal" fill="#1a1a1a" textLength="25.1" lengthAdjust="spacingAndGlyphs">ИЗОКЛ</text>
<text x="492" y="51.1" font-family="Liberation Sans" font-size="8.5" font-weight="400" font-style="normal" fill="#1a1a1a" textLength="10.0" lengthAdjust="spacingAndGlyphs">R5</text>
<text x="569.7" y="51.1" font-family="Liberation Sans" font-size="8.5" font-weight="400" font-style="normal" fill="#1a1a1a" textLength="32.3" lengthAdjust="spacingAndGlyphs">Standard</text>
<text x="664" y="51.1" font-family="Liberation Sans" font-size="8.5" font-weight="400" font-style="normal" fill="#1a1a1a" textLength="32.8" lengthAdjust="spacingAndGlyphs">Standard</text>
<path d="M101.5 61.5 l2 2 l2 -2" stroke="#4d6185" stroke-width="1.3" fill="none"/>
<text x="13.4" y="66.1" font-family="Liberation Sans" font-size="8.5" font-weight="400" font-style="normal" fill="#1a1a1a" textLength="81.2" lengthAdjust="spacingAndGlyphs">Лекционны...профиль</text>
<path d="M320.2 61.5 l2 2 l2 -2" stroke="#4d6185" stroke-width="1.3" fill="none"/>
<text x="205.1" y="66.1" font-family="Liberation Sans" font-size="8.5" font-weight="400" font-style="normal" fill="#1a1a1a" textLength="13.5" lengthAdjust="spacingAndGlyphs">ЛВК</text>
<path d="M452.5 61.5 l2 2 l2 -2" stroke="#4d6185" stroke-width="1.3" fill="none"/>
<text x="385.4" y="66.1" font-family="Liberation Sans" font-size="8.5" font-weight="400" font-style="normal" fill="#1a1a1a" textLength="29.1" lengthAdjust="spacingAndGlyphs">Послою</text>
<path d="M548.1 61.5 l2 2 l2 -2" stroke="#4d6185" stroke-width="1.3" fill="none"/>
<text x="505" y="66.1" font-family="Liberation Sans" font-size="8.5" font-weight="400" font-style="normal" fill="#1a1a1a" textLength="39.0" lengthAdjust="spacingAndGlyphs">CO...UOUS</text>
<path d="M623.2 61.5 l2 2 l2 -2" stroke="#4d6185" stroke-width="1.3" fill="none"/>
<text x="585.9" y="66.1" font-family="Liberation Sans" font-size="8.5" font-weight="400" font-style="normal" fill="#1a1a1a" textLength="29.1" lengthAdjust="spacingAndGlyphs">Послою</text>
<path d="M693.5 61.5 l2 2 l2 -2" stroke="#c9c7ba" stroke-width="1.2" fill="none"/>
<text x="641.4" y="66.1" font-family="Liberation Sans" font-size="8.5" font-weight="400" font-style="normal" fill="#b8b6a8" textLength="32.8" lengthAdjust="spacingAndGlyphs">Поцветч</text>
<path d="M615.5 77.5 l2 2 l2 -2" stroke="#c9c7ba" stroke-width="1.2" fill="none"/>
<path d="M636.0 96.95 l2.5 -2.5 l2.5 2.5" stroke="#4d6185" stroke-width="1.4" fill="none"/>
<path d="M636 212.0 h5 M636 214.0 h5 M636 216.0 h5" stroke="#a9bde6" stroke-width="0.7"/>
<path d="M636.0 499.3 l2.5 2.5 l2.5 -2.5" stroke="#4d6185" stroke-width="1.4" fill="none"/>
<path d="M441.5 510.25 l-2.5 2.5 l2.5 2.5" stroke="#4d6185" stroke-width="1.4" fill="none"/>
<path d="M557.7 510.75 h6 M557.7 512.75 h6 M557.7 514.75 h6" stroke="#a9bde6" stroke-width="0.7"/>
<path d="M625.05 510.25 l2.5 2.5 l-2.5 2.5" stroke="#4d6185" stroke-width="1.4" fill="none"/>
<path d="M41 510.3v5.4M46 510.3l-3.2 2.7l3.2 2.7zM56.5 510.3l-3.2 2.7l3.2 2.7zM63 510.3l3.2 2.7l-3.2 2.7zM74 510.3l3.2 2.7l-3.2 2.7zM78.5 510.3v5.4" stroke="#a8a595" fill="#a8a595" stroke-width="0.9"/>
<path d="M127.5 507.5 L123.8 517.5 H164 L167.7 507.5" fill="#ece9d8" stroke="#8c8a7c" stroke-width="1"/>
<path d="M80.6 507.3 L85.5 517.5 H123.8 L127.5 507.3" fill="#fff" stroke="#6c6a5c" stroke-width="1"/>
<text x="90" y="515.8" font-family="Liberation Sans" font-size="9" fill="#111" textLength="28.5" lengthAdjust="spacingAndGlyphs">Модель</text>
<text x="130.5" y="515.8" font-family="Liberation Sans" font-size="9" fill="#111" textLength="27" lengthAdjust="spacingAndGlyphs">Layout1</text>
<path d="M682.3 109.8h4.4M683.1 108l2.8 3.6M685.9 108l-2.8 3.6" stroke="#333" stroke-width="0.9"/>
<path d="M688.8 109.8h4.4M689.6 108l2.8 3.6M692.4 108l-2.8 3.6" stroke="#333" stroke-width="0.9"/>
<path d="M695.3 109.8h4.4M696.1 108l2.8 3.6M698.9 108l-2.8 3.6" stroke="#333" stroke-width="0.9"/>
<path d="M701.8 109.8h4.4M702.6 108l2.8 3.6M705.4 108l-2.8 3.6" stroke="#333" stroke-width="0.9"/>
<text x="681.7" y="103.1" font-family="Liberation Sans" font-size="8.5" font-weight="400" font-style="normal" fill="#2a2a2a" textLength="31.8" lengthAdjust="spacingAndGlyphs">AutoCAD</text>
<text x="681.6" y="125.4" font-family="Liberation Sans" font-size="8.5" font-weight="400" font-style="normal" fill="#2a2a2a" textLength="22.4" lengthAdjust="spacingAndGlyphs">Ручка</text>
<text x="683.8" y="136.1" font-family="Liberation Sans" font-size="8.5" font-weight="400" font-style="normal" fill="#2a2a2a" textLength="25.2" lengthAdjust="spacingAndGlyphs">Редакт</text>
<text x="681.6" y="158.2" font-family="Liberation Sans" font-size="8.5" font-weight="400" font-style="normal" fill="#2a2a2a" textLength="39.6" lengthAdjust="spacingAndGlyphs">Перенести</text>
<text x="681.6" y="168.9" font-family="Liberation Sans" font-size="8.5" font-weight="400" font-style="normal" fill="#2a2a2a" textLength="29.7" lengthAdjust="spacingAndGlyphs">Зеркало</text>
<text x="681.6" y="179.9" font-family="Liberation Sans" font-size="8.5" font-weight="400" font-style="normal" fill="#2a2a2a" textLength="39.9" lengthAdjust="spacingAndGlyphs">Повернуть</text>
<text x="681.6" y="190.5" font-family="Liberation Sans" font-size="8.5" font-weight="400" font-style="normal" fill="#2a2a2a" textLength="32.7" lengthAdjust="spacingAndGlyphs">Масштаб</text>
<text x="681.6" y="200.9" font-family="Liberation Sans" font-size="8.5" font-weight="400" font-style="normal" fill="#2a2a2a" textLength="39.3" lengthAdjust="spacingAndGlyphs">Растянуть</text>
<text x="681.6" y="223.6" font-family="Liberation Sans" font-size="8.5" font-weight="400" font-style="normal" fill="#2a2a2a" textLength="28.9" lengthAdjust="spacingAndGlyphs">Базовая</text>
<text x="681.6" y="234.6" font-family="Liberation Sans" font-size="8.5" font-weight="400" font-style="normal" fill="#2a2a2a" textLength="31.4" lengthAdjust="spacingAndGlyphs">Копиров</text>
<text x="681.6" y="245.8" font-family="Liberation Sans" font-size="8.5" font-weight="400" font-style="normal" fill="#2a2a2a" textLength="27.5" lengthAdjust="spacingAndGlyphs">Ссылка</text>
<text x="681.6" y="256.3" font-family="Liberation Sans" font-size="8.5" font-weight="400" font-style="normal" fill="#2a2a2a" textLength="37.7" lengthAdjust="spacingAndGlyphs">Отменить</text>
<text x="681.6" y="278.6" font-family="Liberation Sans" font-size="8.5" font-weight="400" font-style="normal" fill="#2a2a2a" textLength="37.3" lengthAdjust="spacingAndGlyphs">ПровСвой</text>
<text x="681.6" y="300.6" font-family="Liberation Sans" font-size="8.5" font-weight="400" font-style="normal" fill="#2a2a2a" textLength="24.1" lengthAdjust="spacingAndGlyphs">Выход</text>
<text x="681.6" y="311.8" font-family="Liberation Sans" font-size="8.5" font-weight="400" font-style="normal" fill="#2a2a2a" textLength="28.5" lengthAdjust="spacingAndGlyphs">Отмена</text>
<text x="13.8" y="530.9" font-family="Liberation Mono" font-size="9.5" font-weight="400" font-style="normal" fill="#1a1a1a" textLength="39.8" lengthAdjust="spacingAndGlyphs">Команда</text>
<text x="54" y="530.9" font-family="Liberation Mono" font-size="9.5" font-weight="400" font-style="normal" fill="#1a1a1a" textLength="4.0" lengthAdjust="spacingAndGlyphs">:</text>
<text x="13.8" y="553" font-family="Liberation Mono" font-size="9.5" font-weight="400" font-style="normal" fill="#1a1a1a" textLength="39.8" lengthAdjust="spacingAndGlyphs">Команда</text>
<text x="54" y="553" font-family="Liberation Mono" font-size="9.5" font-weight="400" font-style="normal" fill="#1a1a1a" textLength="4.0" lengthAdjust="spacingAndGlyphs">:</text>
<path d="M727.3 527.95 l2.5 -2.5 l2.5 2.5" stroke="#4d6185" stroke-width="1.4" fill="none"/>
<path d="M727.3 536.05 l2.5 2.5 l2.5 -2.5" stroke="#4d6185" stroke-width="1.4" fill="none"/>
<path d="M682.45 546.25 l-2.5 2.5 l2.5 2.5" stroke="#4d6185" stroke-width="1.4" fill="none"/>
<path d="M691.3 546.75 h5.300000000000001 M691.3 548.75 h5.300000000000001 M691.3 550.75 h5.300000000000001" stroke="#a9bde6" stroke-width="0.7"/>
<path d="M715.3 546.25 l2.5 2.5 l-2.5 2.5" stroke="#4d6185" stroke-width="1.4" fill="none"/>
<text x="10.7" y="564.2" font-family="Liberation Sans" font-size="8.5" font-weight="400" font-style="normal" fill="#1a1a1a" textLength="60.3" lengthAdjust="spacingAndGlyphs">7915.3, 2010.0, 0.0</text>
<text x="92.9" y="564.2" font-family="Liberation Sans" font-size="8.5" font-weight="400" font-style="normal" fill="#1a1a1a" textLength="15.5" lengthAdjust="spacingAndGlyphs">ШАГ</text>
<text x="112.5" y="564.2" font-family="Liberation Sans" font-size="8.5" font-weight="400" font-style="normal" fill="#1a1a1a" textLength="25.7" lengthAdjust="spacingAndGlyphs">СЕТКА</text>
<text x="142.2" y="564.2" font-family="Liberation Sans" font-size="8.5" font-weight="400" font-style="normal" fill="#1a1a1a" textLength="21.7" lengthAdjust="spacingAndGlyphs">ОРТО</text>
<text x="167.4" y="564.2" font-family="Liberation Sans" font-size="8.5" font-weight="400" font-style="normal" fill="#1a1a1a" textLength="46.7" lengthAdjust="spacingAndGlyphs">ОТС-ПОЛЯР</text>
<text x="216.8" y="564.2" font-family="Liberation Sans" font-size="8.5" font-weight="400" font-style="normal" fill="#1a1a1a" textLength="42.8" lengthAdjust="spacingAndGlyphs">ПРИВЯЗКА</text>
<text x="263" y="564.2" font-family="Liberation Sans" font-size="8.5" font-weight="400" font-style="normal" fill="#1a1a1a" textLength="52.1" lengthAdjust="spacingAndGlyphs">ОТС-ОБЪЕКТ</text>
<text x="318.5" y="564.2" font-family="Liberation Sans" font-size="8.5" font-weight="400" font-style="normal" fill="#1a1a1a" textLength="21.8" lengthAdjust="spacingAndGlyphs">ДПСК</text>
<text x="343" y="564.2" font-family="Liberation Sans" font-size="8.5" font-weight="400" font-style="normal" fill="#1a1a1a" textLength="16.9" lengthAdjust="spacingAndGlyphs">ДИН</text>
<text x="363.3" y="564.2" font-family="Liberation Sans" font-size="8.5" font-weight="400" font-style="normal" fill="#1a1a1a" textLength="16.2" lengthAdjust="spacingAndGlyphs">ВЕС</text>
<text x="382.9" y="564.2" font-family="Liberation Sans" font-size="8.5" font-weight="400" font-style="normal" fill="#1a1a1a" textLength="10.8" lengthAdjust="spacingAndGlyphs">БС</text>
<rect x="512" y="558.5" width="6.5" height="6.5" fill="#f4f4f4" stroke="#333" stroke-width="0.8"/><path d="M513.5 560l3 3.5" stroke="#333" stroke-width="0.9"/><path d="M511 566.5h8.5" stroke="#333" stroke-width="0.9"/>
<rect x="523.5" y="558.3" width="3.8" height="4.5" fill="#f4f4f4" stroke="#333" stroke-width="0.8"/><rect x="528" y="558.3" width="3.8" height="4.5" fill="#f4f4f4" stroke="#333" stroke-width="0.8"/><path d="M523 566.2h9.5" stroke="#333" stroke-width="1.2"/>
<g transform="translate(542.2,557.5)" stroke-linecap="round"><path d="M1.5 5c0-2 2-3 4-2.5s3 2 2.5 4s-2 3-4 2.5s-2.5-2-2.5-4z" fill="#e3e7ec" stroke="#66707c"/><path d="M8 0.5l0.5 1.5l1.5 0.5l-1.5 0.5l-0.5 1.5l-0.5-1.5l-1.5-0.5l1.5-0.5z" fill="#2f3642"/></g>
<g transform="translate(554.8,557.5)" stroke-linecap="round"><circle cx="4" cy="4" r="3" fill="#e8f1f6" stroke="#2f3642" stroke-width="1.1"/><path d="M6.3 6.3l3 3" stroke="#2f3642" stroke-width="1.6"/></g>
<circle cx="572.3" cy="562.2" r="4.2" fill="#e8ecf0" stroke="#555" stroke-width="0.9"/><rect x="570.3" y="560.2" width="4" height="4" fill="none" stroke="#555" stroke-width="0.8"/>
<path d="M581 558h8" stroke="#333" stroke-width="1.2" stroke-dasharray="1.5 1"/><rect x="582.5" y="560" width="5" height="6" fill="#f4f4f4" stroke="#333" stroke-width="0.8"/><path d="M584 561.5l2 1.5l-2 1.5z" fill="#333"/>
<path d="M605 558v4l-3.5 4M605 562l3.5 4" stroke="#444" stroke-width="1.2" fill="none"/><path d="M624 561h4l-2 2.2z" fill="#222"/>
<text x="611" y="565" font-family="Liberation Sans" font-size="8.5" font-weight="400" font-style="normal" fill="#222" textLength="9.0" lengthAdjust="spacingAndGlyphs">1:1</text>
<path d="M636 558v4l-3.5 4M636 562l3.5 4" stroke="#444" stroke-width="1.2" fill="none"/><circle cx="638.5" cy="564" r="1.8" fill="#f0a020"/>
<path d="M648.7 558v4l-3.5 4M648.7 562l3.5 4" stroke="#8a8a8a" stroke-width="1.1" fill="none"/>
<circle cx="666" cy="562.2" r="3.6" fill="none" stroke="#444" stroke-width="1.6" stroke-dasharray="1.4 0.9"/><circle cx="666" cy="562.2" r="1.5" fill="none" stroke="#444" stroke-width="0.9"/>
<path d="M677 561v-1.5a2 2 0 0 1 4 0v1.5" fill="none" stroke="#444" stroke-width="1"/><rect x="675" y="561.5" width="5" height="4.5" fill="#f4f4f4" stroke="#444" stroke-width="0.8"/>
<rect x="689.5" y="558" width="9" height="8" fill="#c8d4e0" stroke="#445" stroke-width="0.8"/><path d="M692 563l2 2l4-4" stroke="#20a020" stroke-width="1.5" fill="none"/><path d="M706 561.5h2.5v3h-2.5z" fill="#222"/><rect x="711.8" y="558.3" width="8" height="7.6" fill="#fafafa" stroke="#444" stroke-width="0.9"/><path d="M711.8 559.5h8" stroke="#444" stroke-width="1.3"/>
<path d="M733 560.5h1.2v1.2h-1.2zM731 562.5h1.2v1.2h-1.2zM733 562.5h1.2v1.2h-1.2zM729 564.5h1.2v1.2h-1.2zM731 564.5h1.2v1.2h-1.2zM733 564.5h1.2v1.2h-1.2z" fill="#ddd"/>
<text x="472.9" y="564.2" font-family="Liberation Sans" font-size="8" font-weight="400" font-style="normal" fill="#1a1a1a" textLength="33.5" lengthAdjust="spacingAndGlyphs">МОДЕЛЬ</text>
<text x="23.7" y="586.3" font-family="Liberation Sans" font-size="14" font-weight="700" font-style="italic" fill="#fff" textLength="26.6" lengthAdjust="spacingAndGlyphs">пуск</text>
<g transform="translate(6,574.5) skewY(-4)"><path d="M0.5 1.5q2.5-1.5 5.5 0v5q-3-1.5-5.5 0z" fill="#f0582a"/><path d="M6.8 1.8q3-1.2 6 0.2v5q-3-1.4-6-0.2z" fill="#5ab530"/><path d="M0 7.2q2.5-1.5 5.5 0v5q-3-1.5-5.5 0z" fill="#2a8ae8"/><path d="M6.3 7.5q3-1.2 6 0.2v5q-3-1.4-6-0.2z" fill="#f8c420"/></g>
<rect x="75.5" y="575.3" width="11.5" height="11.7" rx="1.5" fill="#f8f8f8" stroke="#203a70" stroke-width="0.9"/><path d="M77 577.5h8.5l-1 2h-6.5z" fill="#2a52b0"/><path d="M78 582.5q2-1 3.5 0q1.5 1 3 0" stroke="#f08a30" stroke-width="1" fill="none"/><path d="M75.8 585h11v1.7h-11z" fill="#f07820"/>
<rect x="168.8" y="576" width="10.6" height="11" fill="#f8f8f8"/><path d="M169.5 586.5 L172 576.5 L174 576.5 L179 585.5 Z" fill="#d82020"/>
<path d="M260.5 575.5h8l3 3v8.5h-11z" fill="#f4f6fa" stroke="#5a6a8a" stroke-width="0.8"/><rect x="262" y="578" width="6" height="5" fill="#2a4a9a"/><path d="M263 579l1 3l1-2l1 2l1-3" stroke="#fff" stroke-width="0.6" fill="none"/>
<circle cx="663.2" cy="580.8" r="5" fill="#3a9af0" stroke="#e8f4ff" stroke-width="1.2"/><path d="M664.5 578l-2.5 2.8l2.5 2.8" stroke="#fff" stroke-width="1.4" fill="none"/>
<rect x="672" y="575" width="6.5" height="6" fill="#5a6aa0" stroke="#283870" stroke-width="0.6"/><rect x="668.5" y="578.5" width="6.5" height="6" fill="#7080b8" stroke="#283870" stroke-width="0.6"/><path d="M670 586.5h5" stroke="#283870" stroke-width="1"/>
<circle cx="686" cy="580.8" r="5.8" fill="#e85a10"/><circle cx="686" cy="580.8" r="4.5" fill="#f88a20"/><circle cx="686" cy="580.3" r="2.4" fill="none" stroke="#fff" stroke-width="1.3"/><path d="M687 583l2.5 1.5" stroke="#fff" stroke-width="1.3"/>
<rect x="693.5" y="575" width="11" height="11.7" rx="1.5" fill="#f8f8f8" stroke="#203a70" stroke-width="0.9"/><path d="M695 577h8l-1 2h-6z" fill="#2a52b0"/><path d="M696 582q2-1 3.5 0q1.5 1 3 0" stroke="#f08a30" stroke-width="1" fill="none"/><path d="M693.8 584.7h10.5v1.7h-10.5z" fill="#f07820"/>
<text x="89.2" y="585" font-family="Liberation Sans" font-size="8" font-weight="400" font-style="normal" fill="#fff" textLength="61.5" lengthAdjust="spacingAndGlyphs">VIA HD Audio D...</text>
<text x="182.3" y="585" font-family="Liberation Sans" font-size="8" font-weight="400" font-style="normal" fill="#fff" textLength="61.7" lengthAdjust="spacingAndGlyphs">AutoCAD 2009 ...</text>
<text x="273.8" y="585" font-family="Liberation Sans" font-size="8" font-weight="400" font-style="normal" fill="#fff" textLength="61.4" lengthAdjust="spacingAndGlyphs">РИС К ЛЕКЦИЯ...</text>
<text x="637.6" y="585" font-family="Liberation Sans" font-size="8" font-weight="400" font-style="normal" fill="#fff" textLength="10.9" lengthAdjust="spacingAndGlyphs">EN</text>
<text x="708.6" y="585" font-family="Liberation Sans" font-size="8.5" font-weight="400" font-style="normal" fill="#fff" textLength="21.1" lengthAdjust="spacingAndGlyphs">21:23</text>
<rect x="89" y="116" width="510" height="2" fill="#151515"/><rect x="89" y="116" width="1.5" height="361" fill="#151515"/><rect x="598" y="116" width="1.5" height="361.5" fill="#2a2a2a"/><rect x="89" y="476" width="510" height="1.5" fill="#8a8a8a"/><rect x="113" y="123" width="479.5" height="1.2" fill="#151515"/><rect x="113" y="123" width="1.2" height="348" fill="#252525"/><rect x="591" y="123" width="1.3" height="348.3" fill="#151515"/><rect x="113" y="470" width="479.3" height="1.3" fill="#151515"/><line x1="280.5" y1="151.5" x2="280.5" y2="461" stroke="#3a3a3a" stroke-width="1"/><line x1="423.5" y1="151.5" x2="423.5" y2="427" stroke="#3a3a3a" stroke-width="1"/><line x1="196" y1="211.5" x2="494" y2="211.5" stroke="#3a3a3a" stroke-width="1"/><line x1="229.8" y1="191.5" x2="325.8" y2="191.5" stroke="#3a3a3a" stroke-width="1"/><line x1="196.5" y1="289.5" x2="485" y2="289.5" stroke="#3a3a3a" stroke-width="1"/><line x1="196" y1="370.5" x2="501" y2="370.5" stroke="#3a3a3a" stroke-width="1"/><circle cx="280.4" cy="211.4" r="24.4" fill="none" stroke="#7a7a7a" stroke-width="1"/><circle cx="423.4" cy="211.4" r="24.4" fill="none" stroke="#7a7a7a" stroke-width="1"/><circle cx="280.4" cy="289.6" r="24.4" fill="none" stroke="#7a7a7a" stroke-width="1"/><circle cx="423.4" cy="289.6" r="24.4" fill="none" stroke="#7a7a7a" stroke-width="1"/><circle cx="280.4" cy="370.4" r="24.4" fill="none" stroke="#7a7a7a" stroke-width="1"/><circle cx="423.4" cy="370.4" r="24.4" fill="none" stroke="#7a7a7a" stroke-width="1"/><polyline points="315,191.5 349,200.5 389,200.5" fill="none" stroke="#4a4a4a" stroke-width="1"/><polyline points="382,230 460,165.7 496,175.5 534.5,175.5" fill="none" stroke="#4a4a4a" stroke-width="1"/><g stroke="#727272" stroke-width="0.8"><line x1="269.64" y1="348.50" x2="291.16" y2="348.50"/><line x1="265.22" y1="351.30" x2="295.58" y2="351.30"/><line x1="262.24" y1="354.10" x2="298.56" y2="354.10"/><line x1="260.07" y1="356.90" x2="300.73" y2="356.90"/><line x1="258.47" y1="359.70" x2="302.33" y2="359.70"/><line x1="257.31" y1="362.50" x2="303.49" y2="362.50"/><line x1="256.54" y1="365.30" x2="304.26" y2="365.30"/><line x1="256.11" y1="368.10" x2="304.69" y2="368.10"/><line x1="256.01" y1="370.90" x2="304.79" y2="370.90"/><line x1="256.22" y1="373.70" x2="304.58" y2="373.70"/><line x1="256.77" y1="376.50" x2="304.03" y2="376.50"/><line x1="257.68" y1="379.30" x2="303.12" y2="379.30"/><line x1="258.99" y1="382.10" x2="301.81" y2="382.10"/><line x1="260.78" y1="384.90" x2="300.02" y2="384.90"/><line x1="263.19" y1="387.70" x2="297.61" y2="387.70"/><line x1="266.57" y1="390.50" x2="294.23" y2="390.50"/><line x1="271.98" y1="393.30" x2="288.82" y2="393.30"/></g><g stroke="#4a4a4a" stroke-width="0.8"><ellipse cx="280.4" cy="370.4" rx="8.4" ry="24.4" fill="none"/><ellipse cx="280.4" cy="370.4" rx="16.7" ry="24.4" fill="none"/></g><clipPath id="cut"><path d="M380 380 L399.6 374.5 L431.6 348.6 L440 335 L470 335 L470 410 L380 410 Z"/></clipPath><g stroke="#727272" stroke-width="0.8" clip-path="url(#cut)"><line x1="412.64" y1="348.50" x2="434.16" y2="348.50"/><line x1="408.22" y1="351.30" x2="438.58" y2="351.30"/><line x1="405.24" y1="354.10" x2="441.56" y2="354.10"/><line x1="403.07" y1="356.90" x2="443.73" y2="356.90"/><line x1="401.47" y1="359.70" x2="445.33" y2="359.70"/><line x1="400.31" y1="362.50" x2="446.49" y2="362.50"/><line x1="399.54" y1="365.30" x2="447.26" y2="365.30"/><line x1="399.11" y1="368.10" x2="447.69" y2="368.10"/><line x1="399.01" y1="370.90" x2="447.79" y2="370.90"/><line x1="399.22" y1="373.70" x2="447.58" y2="373.70"/><line x1="399.77" y1="376.50" x2="447.03" y2="376.50"/><line x1="400.68" y1="379.30" x2="446.12" y2="379.30"/><line x1="401.99" y1="382.10" x2="444.81" y2="382.10"/><line x1="403.78" y1="384.90" x2="443.02" y2="384.90"/><line x1="406.19" y1="387.70" x2="440.61" y2="387.70"/><line x1="409.57" y1="390.50" x2="437.23" y2="390.50"/><line x1="414.98" y1="393.30" x2="431.82" y2="393.30"/></g><g stroke="#4a4a4a" stroke-width="0.8" clip-path="url(#cut)"><ellipse cx="423.4" cy="370.4" rx="8.4" ry="24.4" fill="none"/><ellipse cx="423.4" cy="370.4" rx="16.7" ry="24.4" fill="none"/></g><line x1="399.6" y1="374.5" x2="431.6" y2="348.6" stroke="#333" stroke-width="1"/><line x1="367" y1="452.5" x2="591" y2="452.5" stroke="#1a1a1a" stroke-width="1"/><line x1="367" y1="461.5" x2="446.5" y2="461.5" stroke="#1a1a1a" stroke-width="1"/><line x1="567" y1="461.5" x2="591" y2="461.5" stroke="#1a1a1a" stroke-width="1"/><line x1="367.5" y1="452" x2="367.5" y2="470.5" stroke="#1a1a1a" stroke-width="1"/><line x1="388.5" y1="452" x2="388.5" y2="470.5" stroke="#1a1a1a" stroke-width="1"/><line x1="416.5" y1="452" x2="416.5" y2="470.5" stroke="#1a1a1a" stroke-width="1"/><line x1="434.5" y1="452" x2="434.5" y2="470.5" stroke="#1a1a1a" stroke-width="1"/><line x1="446.5" y1="452" x2="446.5" y2="470.5" stroke="#1a1a1a" stroke-width="1"/><line x1="567.5" y1="452" x2="567.5" y2="470.5" stroke="#1a1a1a" stroke-width="1"/><line x1="579.5" y1="452" x2="579.5" y2="470.5" stroke="#1a1a1a" stroke-width="1"/><text x="126.5" y="137.8" font-family="Liberation Sans" font-weight="700" font-size="10" fill="#111" textLength="93" lengthAdjust="spacingAndGlyphs">Плоские сечения сферы</text><text x="356" y="198" font-family="Liberation Sans" font-weight="700" font-size="6.5" fill="#111" textLength="31.5" lengthAdjust="spacingAndGlyphs">окружность</text><text x="352" y="211" font-family="Liberation Sans" font-weight="700" font-size="6.5" fill="#111" textLength="28" lengthAdjust="spacingAndGlyphs">параллель</text><text x="503" y="172.3" font-family="Liberation Sans" font-weight="700" font-size="6.5" fill="#111" textLength="16" lengthAdjust="spacingAndGlyphs">эллипс</text><text x="463.8" y="463.3" font-family="Liberation Sans" font-weight="700" font-size="7.5" fill="#111" textLength="73" lengthAdjust="spacingAndGlyphs">Образование поверхностей</text><text x="370" y="459.3" font-family="Liberation Sans" font-weight="700" font-size="4.5" fill="#111" textLength="13" lengthAdjust="spacingAndGlyphs">Разраб.</text><text x="370" y="468.6" font-family="Liberation Sans" font-weight="700" font-size="4.5" fill="#111" textLength="10" lengthAdjust="spacingAndGlyphs">Пров.</text><text x="389.5" y="468.8" font-family="Liberation Sans" font-weight="700" font-size="4.5" fill="#111" textLength="20" lengthAdjust="spacingAndGlyphs">Лысенко Е.А.</text><text x="569" y="459" font-family="Liberation Sans" font-weight="700" font-size="4" fill="#111" textLength="7" lengthAdjust="spacingAndGlyphs">Лит.</text><text x="581" y="459" font-family="Liberation Sans" font-weight="700" font-size="4" fill="#111" textLength="8.5" lengthAdjust="spacingAndGlyphs">Масса</text><line x1="605.7" y1="504.5" x2="632" y2="504.5" stroke="#555" stroke-width="1"/><line x1="631.5" y1="480" x2="631.5" y2="505" stroke="#555" stroke-width="1"/><rect x="628" y="500.5" width="4" height="4" fill="none" stroke="#555" stroke-width="0.8"/></svg>
</body></html>
